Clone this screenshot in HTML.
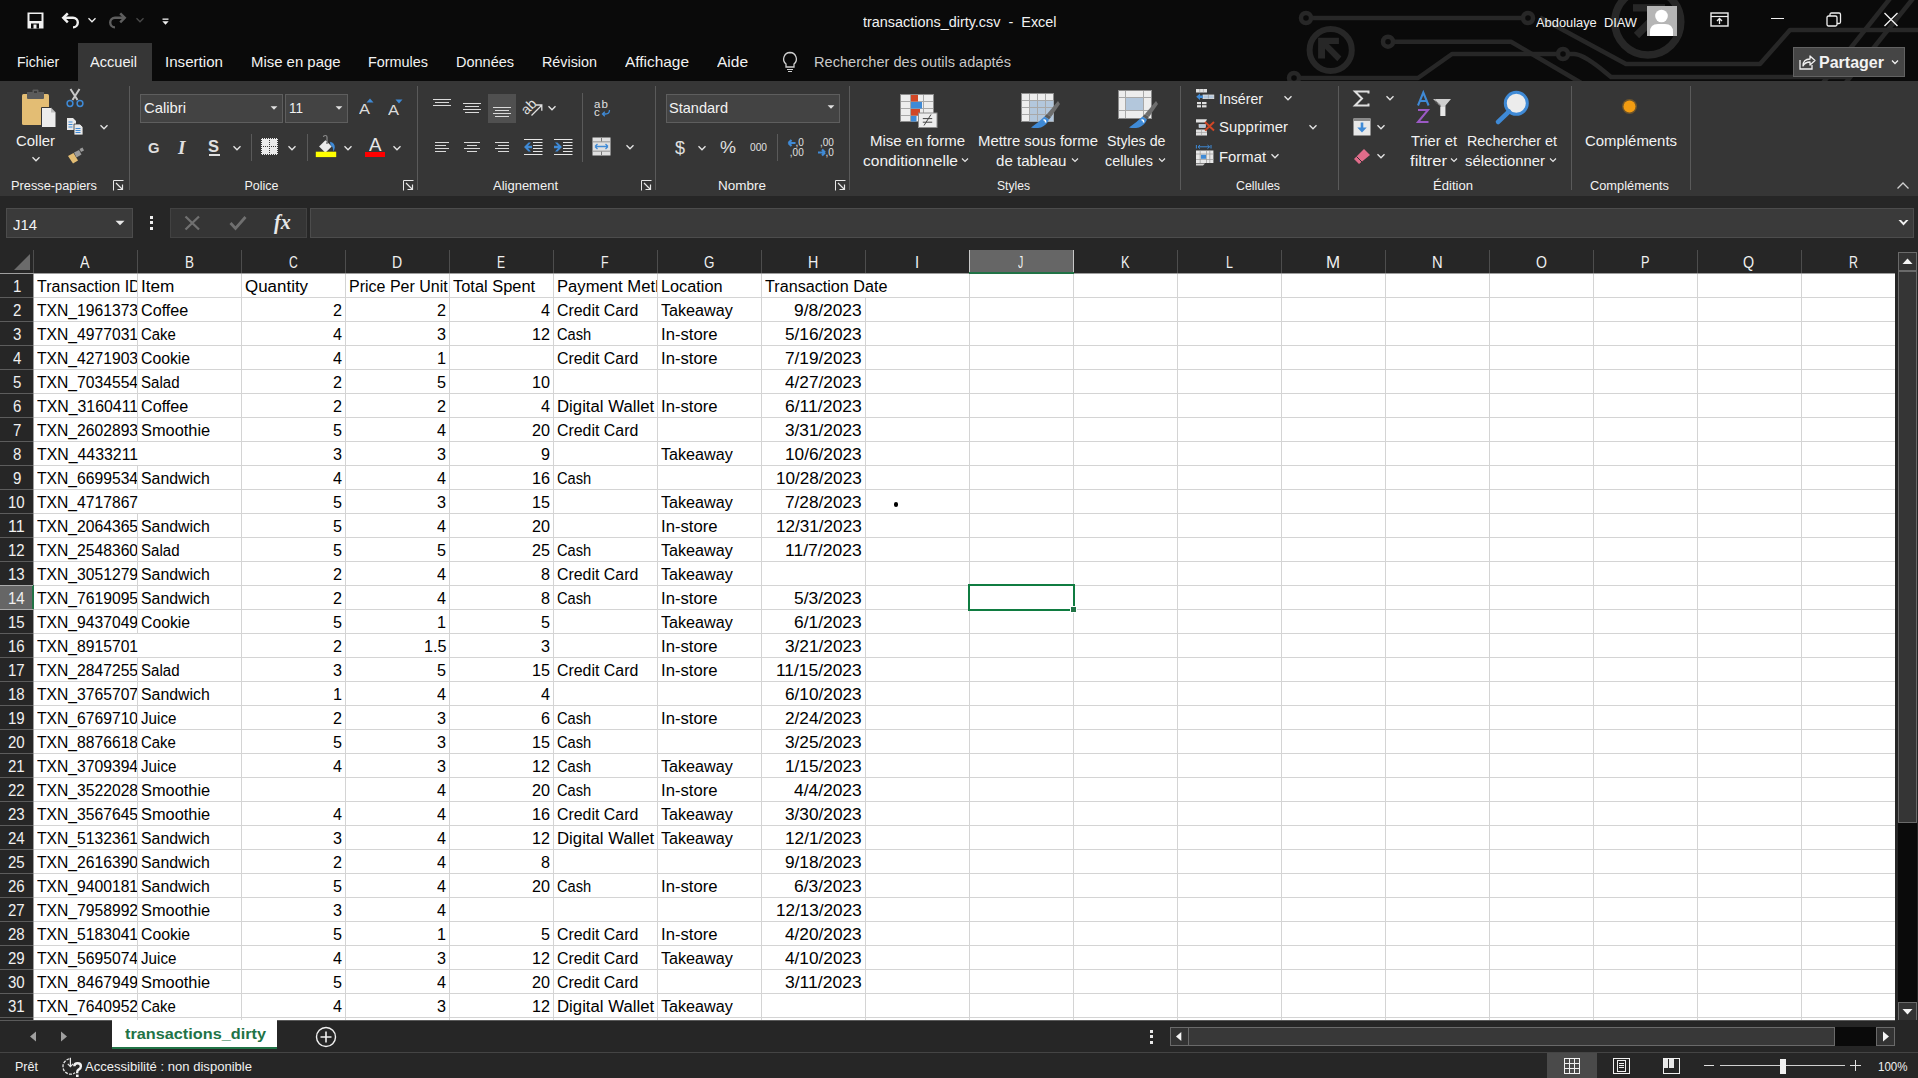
<!DOCTYPE html><html><head><meta charset="utf-8"><style>
html,body{margin:0;padding:0;}
body{width:1918px;height:1078px;overflow:hidden;position:relative;background:#262626;font-family:"Liberation Sans",sans-serif;}
.t{position:absolute;white-space:pre;transform-origin:0 0;}
.r{position:absolute;}
.s{position:absolute;overflow:visible;}
</style></head><body>
<div class="r" style="left:0px;top:0px;width:1918px;height:81px;background:#0a0a0a;"></div>
<svg class="s" style="left:0;top:0" width="1918" height="81" viewBox="0 0 1918 81">
<g fill="none" stroke="#272727" stroke-width="4.5" stroke-linejoin="round">
<path d="M1312 18 H1522"/>
<circle cx="1306" cy="18" r="5"/><circle cx="1528" cy="18" r="5"/>
<circle cx="1330.7" cy="50" r="21.1" stroke-width="6"/>
<path d="M1394 41.7 H1511 L1583 84"/>
<circle cx="1388" cy="41.7" r="5"/>
<path d="M1300 78 H1418 L1452 54 H1557"/>
<circle cx="1294" cy="78" r="5"/>
<circle cx="1563" cy="54" r="5"/>
<path d="M1569 54 H1574 Q1582 54 1600 68 L1611 77 H1850"/>
<path d="M1540 17.5 L1626 64 H1760 L1790 30 H1930"/>
<circle cx="1647.8" cy="22" r="33" stroke-width="7.5"/>
<path d="M1822 84 L1892 -4"/><path d="M1845.5 83 L1915 -4"/>
</g>
<path d="M1318.1 37.8 H1338.9 V43.9 H1328.9 L1341.4 56.4 L1337.3 61.2 L1325 48.7 V58.6 H1318.1 Z" fill="#272727"/>
<path d="M1633 4.2 H1665 V11.5 H1633 Z" fill="#272727"/><path d="M1636.5 35.5 L1662 10" stroke="#272727" stroke-width="7.5"/>
</svg>
<svg class="s" style="left:27px;top:12px;" width="17" height="17" viewBox="0 0 17 17"><path d="M0.5 0.5 H16.5 V16.5 H0.5 Z" fill="#f0f0f0"/><rect x="2.5" y="2" width="12" height="7" fill="#0a0a0a"/><rect x="4" y="11.5" width="8" height="5" fill="#0a0a0a"/><rect x="6.5" y="12.5" width="3" height="4" fill="#f0f0f0"/></svg>
<svg class="s" style="left:58px;top:10px;" width="24" height="20" viewBox="0 0 24 20"><path d="M6 7.8 H15 A4.8 4.8 0 0 1 15 17.4" fill="none" stroke="#f0f0f0" stroke-width="2.4"/><path d="M9.8 3.3 L5.3 7.8 L9.8 12.3" fill="none" stroke="#f0f0f0" stroke-width="2.5" stroke-linejoin="miter"/></svg>
<svg class="s" style="left:85.5px;top:14.5px;" width="12" height="10" viewBox="0 0 12 10"><path d="M2.5 3.25 L6 6.75 L9.5 3.25" fill="none" stroke="#f0f0f0" stroke-width="1.3"/></svg>
<svg class="s" style="left:106px;top:10px;" width="24" height="20" viewBox="0 0 24 20"><path d="M18 7.8 H9 A4.8 4.8 0 0 0 9 17.4" fill="none" stroke="#5e5e5e" stroke-width="2.4"/><path d="M14.2 3.3 L18.7 7.8 L14.2 12.3" fill="none" stroke="#5e5e5e" stroke-width="2.5" stroke-linejoin="miter"/></svg>
<svg class="s" style="left:133.5px;top:14.5px;" width="12" height="10" viewBox="0 0 12 10"><path d="M2.5 3.25 L6 6.75 L9.5 3.25" fill="none" stroke="#4a4a4a" stroke-width="1.3"/></svg>
<svg class="s" style="left:161px;top:18px;" width="9" height="8" viewBox="0 0 9 8"><rect x="1.5" y="0.5" width="6" height="1.3" fill="#f0f0f0"/><path d="M1.3 3.3 H7.7 L4.5 6.8 Z" fill="#f0f0f0"/></svg>
<div class="t" style="left:863.00px;top:14.95px;font-size:14px;line-height:14px;color:#f2f2f2;transform:scaleX(1.0292);">transactions_dirty.csv  -  Excel</div>
<div class="t" style="left:1535.50px;top:15.50px;font-size:13px;line-height:13px;color:#f2f2f2;transform:scaleX(0.9890);">Abdoulaye  DIAW</div>
<svg class="s" style="left:1647px;top:6px;" width="30" height="30" viewBox="0 0 30 30"><rect width="30" height="30" fill="#b5b5b5"/><circle cx="14.5" cy="10" r="6.3" fill="#fff"/><path d="M3 30 V26 Q3 18 11 18 H18 Q26 18 26 26 V30 Z" fill="#fff"/></svg>
<svg class="s" style="left:1710px;top:12px;" width="19" height="15" viewBox="0 0 19 15"><rect x="1" y="1" width="17" height="13" fill="none" stroke="#f0f0f0" stroke-width="1.4"/><path d="M1 4.5 H18" stroke="#f0f0f0" stroke-width="1.2"/><path d="M9.5 12 V6.5 M7 9 L9.5 6.5 L12 9" fill="none" stroke="#f0f0f0" stroke-width="1.3"/></svg>
<div class="r" style="left:1771px;top:18px;width:13px;height:1.3px;background:#f0f0f0;"></div>
<svg class="s" style="left:1826px;top:12px;" width="16" height="15" viewBox="0 0 16 15"><rect x="1" y="4" width="10" height="10" rx="1.5" fill="none" stroke="#f0f0f0" stroke-width="1.3"/><path d="M4 4 V2.5 Q4 1 5.5 1 H13 Q14.5 1 14.5 2.5 V10 Q14.5 11.5 13 11.5 H11" fill="none" stroke="#f0f0f0" stroke-width="1.3"/></svg>
<svg class="s" style="left:1883px;top:12px;" width="16" height="15" viewBox="0 0 16 15"><path d="M1.5 1 L14.5 14 M14.5 1 L1.5 14" stroke="#f0f0f0" stroke-width="1.4"/></svg>
<div class="r" style="left:1793px;top:47px;width:112px;height:30px;background:#454545;box-sizing:border-box;border:1px solid #626262;"></div>
<svg class="s" style="left:1799px;top:54px;" width="17" height="16" viewBox="0 0 17 16"><path d="M1 6 V15 H13 V11" fill="none" stroke="#f0f0f0" stroke-width="1.3"/><path d="M4 12 Q4 5 11 5 V2 L16 6.5 L11 11 V8 Q6 8 4 12 Z" fill="none" stroke="#f0f0f0" stroke-width="1.3" stroke-linejoin="round"/></svg>
<div class="t" style="left:1819.00px;top:54.96px;font-size:16px;line-height:16px;color:#f2f2f2;font-weight:bold;">Partager</div>
<svg class="s" style="left:1889px;top:57px;" width="12" height="10" viewBox="0 0 12 10"><path d="M3 3.5 L6 6.5 L9 3.5" fill="none" stroke="#f0f0f0" stroke-width="1.3"/></svg>
<div class="r" style="left:78px;top:43px;width:74px;height:38px;background:#363636;"></div>
<div class="t" style="left:16.60px;top:54.73px;font-size:14.5px;line-height:14.5px;color:#f2f2f2;transform:scaleX(0.9700);">Fichier</div>
<div class="t" style="left:90.30px;top:54.73px;font-size:14.5px;line-height:14.5px;color:#f2f2f2;transform:scaleX(1.0077);">Accueil</div>
<div class="t" style="left:165.00px;top:54.73px;font-size:14.5px;line-height:14.5px;color:#f2f2f2;transform:scaleX(1.0430);">Insertion</div>
<div class="t" style="left:250.50px;top:54.73px;font-size:14.5px;line-height:14.5px;color:#f2f2f2;transform:scaleX(1.0281);">Mise en page</div>
<div class="t" style="left:368.00px;top:54.73px;font-size:14.5px;line-height:14.5px;color:#f2f2f2;transform:scaleX(0.9930);">Formules</div>
<div class="t" style="left:456.00px;top:54.73px;font-size:14.5px;line-height:14.5px;color:#f2f2f2;">Données</div>
<div class="t" style="left:542.00px;top:54.73px;font-size:14.5px;line-height:14.5px;color:#f2f2f2;transform:scaleX(0.9891);">Révision</div>
<div class="t" style="left:625.00px;top:54.73px;font-size:14.5px;line-height:14.5px;color:#f2f2f2;transform:scaleX(1.0633);">Affichage</div>
<div class="t" style="left:717.00px;top:54.73px;font-size:14.5px;line-height:14.5px;color:#f2f2f2;transform:scaleX(1.0682);">Aide</div>
<svg class="s" style="left:781px;top:51px;" width="18" height="22" viewBox="0 0 18 22"><path d="M9 1.5 A6.5 6.5 0 0 0 5 13 V16 H13 V13 A6.5 6.5 0 0 0 9 1.5 Z" fill="none" stroke="#d0d0d0" stroke-width="1.3"/><path d="M6 18.5 H12 M7 20.5 H11" stroke="#d0d0d0" stroke-width="1.2"/></svg>
<div class="t" style="left:814.00px;top:54.73px;font-size:14.5px;line-height:14.5px;color:#c8c8c8;transform:scaleX(1.0059);">Rechercher des outils adaptés</div>
<div class="r" style="left:0px;top:81px;width:1918px;height:115px;background:#363636;"></div>
<svg class="s" style="left:19px;top:88px;" width="40" height="42" viewBox="0 0 40 42"><rect x="3" y="6" width="27" height="31" rx="1.5" fill="#e3bd74"/>
<path d="M8 4 H25 V10 Q25 11 24 11 H9 Q8 11 8 10 Z" fill="#5b5b5b"/><rect x="13.5" y="1.5" width="6" height="4" rx="1" fill="#5b5b5b"/><rect x="15" y="3" width="3" height="2" fill="#3a3a3a"/>
<path d="M22.5 19.5 H32 L37 24.5 V39.5 H22.5 Z" fill="#ececec" stroke="#363636" stroke-width="1"/><path d="M32 20 V24.5 H36.5 Z" fill="#bdbdbd"/></svg>
<div class="t" style="left:16.00px;top:133.85px;font-size:14px;line-height:14px;color:#f2f2f2;transform:scaleX(1.0666);">Coller</div>
<svg class="s" style="left:29.5px;top:153.5px;" width="12" height="10" viewBox="0 0 12 10"><path d="M2.5 3.25 L6 6.75 L9.5 3.25" fill="none" stroke="#e6e6e6" stroke-width="1.3"/></svg>
<svg class="s" style="left:65px;top:88px;" width="20" height="20" viewBox="0 0 20 20"><path d="M5.5 1 L12.5 12 M14.5 1 L7.5 12" stroke="#c8c8c8" stroke-width="2"/><circle cx="5" cy="15.5" r="2.9" fill="none" stroke="#3f8ad6" stroke-width="1.5"/><circle cx="15" cy="15.5" r="2.9" fill="none" stroke="#3f8ad6" stroke-width="1.5"/></svg>
<svg class="s" style="left:66px;top:117px;" width="19" height="19" viewBox="0 0 19 19"><path d="M1 1 H7 L10 4 V13 H1 Z" fill="#e8e8e8"/><path d="M8 7 H14 L17 10 V18 H8 Z" fill="#e8e8e8" stroke="#333" stroke-width="0.8"/><path d="M2.5 5 H6.5 M2.5 7.5 H6.5 M2.5 10 H6.5 M9.5 11.5 H14.5 M9.5 13.5 H14.5 M9.5 15.5 H14.5" stroke="#3f8ad6" stroke-width="1"/></svg>
<svg class="s" style="left:98px;top:122px;" width="12" height="10" viewBox="0 0 12 10"><path d="M2.5 3.25 L6 6.75 L9.5 3.25" fill="none" stroke="#e6e6e6" stroke-width="1.3"/></svg>
<svg class="s" style="left:66px;top:147px;" width="19" height="18" viewBox="0 0 19 18"><path d="M2 9 L7.5 6 L12 13.5 L7 16.5 Z" fill="#e3bd74"/><path d="M8 5.5 L13 3 L15.5 7.5 L10.5 10.5 Z" fill="#9a9a9a"/><path d="M13.5 2 L16.5 0.5 L18 3.5 L15 5 Z" fill="#9a9a9a"/></svg>
<div class="t" style="left:10.60px;top:179.92px;font-size:12.5px;line-height:12.5px;color:#f2f2f2;transform:scaleX(1.0231);">Presse-papiers</div>
<svg class="s" style="left:113px;top:180px;" width="11" height="11" viewBox="0 0 11 11"><path d="M0.5 10.5 V0.5 H10.5" fill="none" stroke="#e6e6e6" stroke-width="1"/><path d="M3 3 L9.5 9.5 M9.5 4.5 V9.5 H4.5" fill="none" stroke="#e6e6e6" stroke-width="1.2"/></svg>
<div class="r" style="left:129px;top:86px;width:1px;height:104px;background:#5a5a5a;"></div>
<div class="r" style="left:140px;top:94px;width:143px;height:29px;background:#434343;box-sizing:border-box;border:1px solid #5e5e5e;"></div>
<div class="t" style="left:144.00px;top:101.23px;font-size:14.5px;line-height:14.5px;color:#f2f2f2;transform:scaleX(1.0221);">Calibri</div>
<svg class="s" style="left:268px;top:103.5px;" width="12" height="8" viewBox="0 0 12 8"><path d="M2.6 2.3 L9.4 2.3 L6 5.7 Z" fill="#e0e0e0"/></svg>
<div class="r" style="left:285px;top:94px;width:63px;height:29px;background:#434343;box-sizing:border-box;border:1px solid #5e5e5e;"></div>
<div class="t" style="left:289.00px;top:101.23px;font-size:14.5px;line-height:14.5px;color:#f2f2f2;transform:scaleX(0.9302);">11</div>
<svg class="s" style="left:333px;top:103.5px;" width="12" height="8" viewBox="0 0 12 8"><path d="M2.6 2.3 L9.4 2.3 L6 5.7 Z" fill="#e0e0e0"/></svg>
<div class="t" style="left:359.00px;top:101.30px;font-size:15px;line-height:15px;color:#dcdcdc;transform:scaleX(1.0994);">A</div>
<svg class="s" style="left:366px;top:98px;" width="8" height="5" viewBox="0 0 8 5"><path d="M0.5 4.5 L4 0.5 L7.5 4.5 Z" fill="#3f8ad6"/></svg>
<div class="t" style="left:388.00px;top:102.30px;font-size:15px;line-height:15px;color:#dcdcdc;transform:scaleX(1.0994);">A</div>
<svg class="s" style="left:395px;top:99px;" width="8" height="5" viewBox="0 0 8 5"><path d="M0.5 0.5 L7.5 0.5 L4 4.5 Z" fill="#3f8ad6"/></svg>
<div class="t" style="left:147.50px;top:139.88px;font-size:15.5px;line-height:15.5px;color:#e0e0e0;font-weight:bold;transform:scaleX(0.9539);">G</div>
<div class="t" style="left:178px;top:138px;font-family:'Liberation Serif',serif;font-style:italic;font-weight:bold;font-size:19px;line-height:20px;color:#e0e0e0;">I</div>
<div class="t" style="left:208.00px;top:139.46px;font-size:16px;line-height:16px;color:#e0e0e0;font-weight:bold;transform:scaleX(1.0307);">S</div>
<div class="r" style="left:208.5px;top:154px;width:11px;height:1.5px;background:#e0e0e0;"></div>
<svg class="s" style="left:230.5px;top:142.5px;" width="12" height="10" viewBox="0 0 12 10"><path d="M2.5 3.25 L6 6.75 L9.5 3.25" fill="none" stroke="#e6e6e6" stroke-width="1.3"/></svg>
<div class="r" style="left:251px;top:134px;width:1px;height:27px;background:#5a5a5a;"></div>
<svg class="s" style="left:255px;top:132px;" width="30" height="30" viewBox="0 0 30 30"><rect x="6" y="6" width="17" height="17" fill="#ebebeb"/><path d="M6.5 6 V23 M22.5 6 V23 M6 6.5 H23 M6 22.5 H23" stroke="#363636" stroke-width="1" stroke-dasharray="1 1"/><path d="M14.5 8 V22 M8 14.5 H22" stroke="#3a3a3a" stroke-width="1" stroke-dasharray="1 1"/></svg>
<svg class="s" style="left:286px;top:142.5px;" width="12" height="10" viewBox="0 0 12 10"><path d="M2.5 3.25 L6 6.75 L9.5 3.25" fill="none" stroke="#e6e6e6" stroke-width="1.3"/></svg>
<div class="r" style="left:307px;top:134px;width:1px;height:27px;background:#5a5a5a;"></div>
<svg class="s" style="left:310px;top:132px;" width="30" height="30" viewBox="0 0 30 30"><path d="M13.5 5 Q13.5 3.5 15.3 3.5 Q17 3.5 17 5 V10.5" fill="none" stroke="#8a8a8a" stroke-width="1.2"/><path d="M15.4 8.2 L21.7 14.5 L15.4 20.8 L9.1 14.5 Z" fill="#ebebeb"/><path d="M17 10 V12" stroke="#363636" stroke-width="1"/><path d="M20 9.8 Q25 11 24.8 15.5 Q24.6 18 23 19.3 Q23.5 15 20.5 13 Z" fill="#3f8ad6"/><rect x="5.8" y="19.7" width="20.4" height="5.4" fill="#ffff00"/></svg>
<svg class="s" style="left:342px;top:142.5px;" width="12" height="10" viewBox="0 0 12 10"><path d="M2.5 3.25 L6 6.75 L9.5 3.25" fill="none" stroke="#e6e6e6" stroke-width="1.3"/></svg>
<div class="t" style="left:368.50px;top:135.76px;font-size:18px;line-height:18px;color:#e8e8e8;transform:scaleX(1.0411);">A</div>
<div class="r" style="left:365px;top:152px;width:20px;height:5px;background:#ff0000;"></div>
<svg class="s" style="left:391px;top:142.5px;" width="12" height="10" viewBox="0 0 12 10"><path d="M2.5 3.25 L6 6.75 L9.5 3.25" fill="none" stroke="#e6e6e6" stroke-width="1.3"/></svg>
<div class="t" style="left:244.50px;top:179.92px;font-size:12.5px;line-height:12.5px;color:#f2f2f2;">Police</div>
<svg class="s" style="left:403px;top:180px;" width="11" height="11" viewBox="0 0 11 11"><path d="M0.5 10.5 V0.5 H10.5" fill="none" stroke="#e6e6e6" stroke-width="1"/><path d="M3 3 L9.5 9.5 M9.5 4.5 V9.5 H4.5" fill="none" stroke="#e6e6e6" stroke-width="1.2"/></svg>
<div class="r" style="left:417px;top:86px;width:1px;height:104px;background:#5a5a5a;"></div>
<div class="r" style="left:433px;top:99px;width:18px;height:1.2px;background:#dadada;"></div>
<div class="r" style="left:435px;top:102px;width:14px;height:1.2px;background:#dadada;"></div>
<div class="r" style="left:433px;top:105px;width:18px;height:1.2px;background:#dadada;"></div>
<div class="r" style="left:463px;top:103px;width:18px;height:1.2px;background:#dadada;"></div>
<div class="r" style="left:465px;top:106px;width:14px;height:1.2px;background:#dadada;"></div>
<div class="r" style="left:463px;top:109px;width:18px;height:1.2px;background:#dadada;"></div>
<div class="r" style="left:465px;top:112px;width:14px;height:1.2px;background:#dadada;"></div>
<div class="r" style="left:488px;top:94px;width:28px;height:29px;background:#505050;"></div>
<div class="r" style="left:493px;top:107px;width:18px;height:1.2px;background:#dadada;"></div>
<div class="r" style="left:495px;top:110px;width:14px;height:1.2px;background:#dadada;"></div>
<div class="r" style="left:493px;top:113px;width:18px;height:1.2px;background:#dadada;"></div>
<div class="r" style="left:495px;top:116px;width:14px;height:1.2px;background:#dadada;"></div>
<svg class="s" style="left:515px;top:90px;" width="35" height="35" viewBox="0 0 35 35"><text x="0" y="0" transform="translate(11.5 25.5) rotate(-45)" font-family="Liberation Sans" font-size="14" fill="#e0e0e0">ab</text><path d="M16.5 25.5 L26.5 15.5 M21 15 H26.8 V20.8" fill="none" stroke="#e0e0e0" stroke-width="1.3"/></svg>
<svg class="s" style="left:546px;top:103px;" width="12" height="10" viewBox="0 0 12 10"><path d="M2.5 3.25 L6 6.75 L9.5 3.25" fill="none" stroke="#e6e6e6" stroke-width="1.3"/></svg>
<div class="r" style="left:435px;top:142px;width:14px;height:1.2px;background:#dadada;"></div>
<div class="r" style="left:435px;top:145px;width:11px;height:1.2px;background:#dadada;"></div>
<div class="r" style="left:435px;top:148px;width:14px;height:1.2px;background:#dadada;"></div>
<div class="r" style="left:435px;top:151px;width:11px;height:1.2px;background:#dadada;"></div>
<div class="r" style="left:464px;top:142px;width:16px;height:1.2px;background:#dadada;"></div>
<div class="r" style="left:467px;top:145px;width:10px;height:1.2px;background:#dadada;"></div>
<div class="r" style="left:464px;top:148px;width:16px;height:1.2px;background:#dadada;"></div>
<div class="r" style="left:467px;top:151px;width:10px;height:1.2px;background:#dadada;"></div>
<div class="r" style="left:495px;top:142px;width:14px;height:1.2px;background:#dadada;"></div>
<div class="r" style="left:498px;top:145px;width:11px;height:1.2px;background:#dadada;"></div>
<div class="r" style="left:495px;top:148px;width:14px;height:1.2px;background:#dadada;"></div>
<div class="r" style="left:498px;top:151px;width:11px;height:1.2px;background:#dadada;"></div>
<svg class="s" style="left:515px;top:130px;" width="70" height="30" viewBox="0 0 70 30"><path d="M9 9.5 H27.5 M18 12.5 H27.5 M18 15.5 H27.5 M18 18.5 H27.5 M18 21.5 H27.5 M9 24.5 H27.5" stroke="#e6e6e6" stroke-width="1.1"/><path d="M9 17 L13.5 12.5 H16 L13 15.7 H17 V18.3 H13 L16 21.5 H13.5 Z" fill="#3f8ad6"/><path d="M39 9.5 H57.5 M48 12.5 H57.5 M48 15.5 H57.5 M48 18.5 H57.5 M48 21.5 H57.5 M39 24.5 H57.5" stroke="#e6e6e6" stroke-width="1.1"/><path d="M47 17 L42.5 12.5 H40 L43 15.7 H39 V18.3 H43 L40 21.5 H42.5 Z" fill="#3f8ad6"/></svg>
<div class="r" style="left:582px;top:93px;width:1px;height:69px;background:#5a5a5a;"></div>
<svg class="s" style="left:590px;top:95px;" width="25" height="25" viewBox="0 0 25 25"><text x="4" y="13" font-family="Liberation Sans" font-size="11.5" fill="#e0e0e0" textLength="14">ab</text><text x="4" y="21" font-family="Liberation Sans" font-size="11.5" fill="#e0e0e0">c</text><path d="M19.5 15 Q19.5 19 15.5 19 H12.5 M14.8 16.8 L12.5 19 L14.8 21.2" fill="none" stroke="#3f8ad6" stroke-width="1.3"/></svg>
<svg class="s" style="left:592px;top:137px;" width="19" height="19" viewBox="0 0 19 19"><rect x="0.5" y="0.5" width="18" height="18" fill="#e0e0e0"/><path d="M1 5 H18 M1 14 H18 M9.5 1 V4.5 M9.5 14.5 V18" stroke="#777" stroke-width="1"/><rect x="1" y="5.5" width="17" height="8" fill="#e0e0e0"/><path d="M3 9.5 H16 M3 9.5 L5.5 7 M3 9.5 L5.5 12 M16 9.5 L13.5 7 M16 9.5 L13.5 12" fill="none" stroke="#3f8ad6" stroke-width="1.3"/></svg>
<svg class="s" style="left:624px;top:142px;" width="12" height="10" viewBox="0 0 12 10"><path d="M2.5 3.25 L6 6.75 L9.5 3.25" fill="none" stroke="#e6e6e6" stroke-width="1.3"/></svg>
<div class="t" style="left:493.00px;top:179.92px;font-size:12.5px;line-height:12.5px;color:#f2f2f2;transform:scaleX(1.0394);">Alignement</div>
<svg class="s" style="left:641px;top:180px;" width="11" height="11" viewBox="0 0 11 11"><path d="M0.5 10.5 V0.5 H10.5" fill="none" stroke="#e6e6e6" stroke-width="1"/><path d="M3 3 L9.5 9.5 M9.5 4.5 V9.5 H4.5" fill="none" stroke="#e6e6e6" stroke-width="1.2"/></svg>
<div class="r" style="left:655px;top:86px;width:1px;height:104px;background:#5a5a5a;"></div>
<div class="r" style="left:666px;top:94px;width:174px;height:29px;background:#434343;box-sizing:border-box;border:1px solid #5e5e5e;"></div>
<div class="t" style="left:669.00px;top:101.23px;font-size:14.5px;line-height:14.5px;color:#f2f2f2;transform:scaleX(1.0026);">Standard</div>
<svg class="s" style="left:824.5px;top:103px;" width="12" height="8" viewBox="0 0 12 8"><path d="M2.6 2.3 L9.4 2.3 L6 5.7 Z" fill="#e0e0e0"/></svg>
<div class="t" style="left:674.50px;top:138.42px;font-size:19px;line-height:19px;color:#e0e0e0;transform:scaleX(0.9465);">$</div>
<svg class="s" style="left:696px;top:142.5px;" width="12" height="10" viewBox="0 0 12 10"><path d="M2.5 3.25 L6 6.75 L9.5 3.25" fill="none" stroke="#e6e6e6" stroke-width="1.3"/></svg>
<div class="t" style="left:720.00px;top:139.11px;font-size:17px;line-height:17px;color:#e0e0e0;transform:scaleX(1.0584);">%</div>
<div class="t" style="left:750.00px;top:142.19px;font-size:11px;line-height:11px;color:#e0e0e0;transform:scaleX(0.9264);">000</div>
<div class="r" style="left:777px;top:134px;width:1px;height:27px;background:#5a5a5a;"></div>
<svg class="s" style="left:785px;top:135px;" width="55" height="25" viewBox="0 0 55 25"><text x="10.5" y="11" font-family="Liberation Sans" font-size="10" fill="#e0e0e0">,0</text><text x="4.8" y="20.5" font-family="Liberation Sans" font-size="10" fill="#e0e0e0">,00</text><path d="M3.5 8 H10.5 M3.5 8 L6.5 5 M3.5 8 L6.5 11" fill="none" stroke="#3f8ad6" stroke-width="2.2"/><text x="35" y="11" font-family="Liberation Sans" font-size="10" fill="#e0e0e0">,00</text><text x="40.5" y="20.5" font-family="Liberation Sans" font-size="10" fill="#e0e0e0">,0</text><path d="M33 17.5 H40 M40 17.5 L37 14.5 M40 17.5 L37 20.5" fill="none" stroke="#3f8ad6" stroke-width="2.2"/></svg>
<div class="t" style="left:717.50px;top:179.92px;font-size:12.5px;line-height:12.5px;color:#f2f2f2;transform:scaleX(1.0797);">Nombre</div>
<svg class="s" style="left:835px;top:180px;" width="11" height="11" viewBox="0 0 11 11"><path d="M0.5 10.5 V0.5 H10.5" fill="none" stroke="#e6e6e6" stroke-width="1"/><path d="M3 3 L9.5 9.5 M9.5 4.5 V9.5 H4.5" fill="none" stroke="#e6e6e6" stroke-width="1.2"/></svg>
<div class="r" style="left:849px;top:86px;width:1px;height:104px;background:#5a5a5a;"></div>
<svg class="s" style="left:890px;top:85px;" width="60" height="50" viewBox="0 0 60 50"><rect x="10.5" y="9.5" width="33" height="27" fill="#ededed" stroke="#8c8c8c" stroke-width="1"/>
<path d="M20.5 10 V36 M33.5 10 V36 M11 16.5 H43 M11 23.5 H43 M11 30.5 H43" stroke="#a8a8a8" stroke-width="1"/>
<rect x="21" y="10" width="7" height="6.5" fill="#d24726"/><rect x="21" y="17" width="11" height="6.5" fill="#3f8ad6"/>
<rect x="21" y="24" width="9" height="6.5" fill="#d24726"/><rect x="21" y="31" width="5.5" height="5.5" fill="#3f8ad6"/>
<rect x="28.5" y="28" width="18.5" height="14.5" fill="#ededed" stroke="#8c8c8c" stroke-width="1"/>
<path d="M34 40.5 L41 29.5 M32.8 33.6 H42.2 M32.8 37.2 H42.2" stroke="#444" stroke-width="1" fill="none"/></svg>
<div class="t" style="left:870.00px;top:134.15px;font-size:14px;line-height:14px;color:#f2f2f2;transform:scaleX(1.0711);">Mise en forme</div>
<div class="t" style="left:863.00px;top:154.15px;font-size:14px;line-height:14px;color:#f2f2f2;transform:scaleX(1.1096);">conditionnelle</div>
<svg class="s" style="left:959px;top:155px;" width="12" height="10" viewBox="0 0 12 10"><path d="M3 3.5 L6 6.5 L9 3.5" fill="none" stroke="#e6e6e6" stroke-width="1.2"/></svg>
<svg class="s" style="left:1010px;top:85px;" width="60" height="50" viewBox="0 0 60 50"><rect x="11.5" y="8.5" width="32" height="28" fill="#ededed" stroke="#8c8c8c" stroke-width="1"/>
<rect x="19.5" y="15.5" width="24" height="21" fill="#b3c7dc"/>
<path d="M19.5 9 V36 M27.5 9 V36 M35.5 9 V36 M12 15.5 H43 M12 22.5 H43 M12 29.5 H43" stroke="#a8a8a8" stroke-width="1"/>
<path d="M48 16 L50 19 L41 32 L37 29 Z" fill="#6e6e6e"/><path d="M37 29 L41 32 L39 34.5 L34.5 31.5 Z" fill="#5a5a5a"/>
<path d="M34.5 31.5 L39 34.5 Q37 40 31 42.5 Q25 43.5 21 42.5 Q29 37 34.5 31.5 Z" fill="#3f8ad6"/>
<path d="M33.5 35 Q36 34.5 35.5 37.5" fill="none" stroke="#fff" stroke-width="1.6"/></svg>
<div class="t" style="left:978.00px;top:134.15px;font-size:14px;line-height:14px;color:#f2f2f2;transform:scaleX(1.0638);">Mettre sous forme</div>
<div class="t" style="left:996.00px;top:154.15px;font-size:14px;line-height:14px;color:#f2f2f2;transform:scaleX(1.0782);">de tableau</div>
<svg class="s" style="left:1069px;top:155px;" width="12" height="10" viewBox="0 0 12 10"><path d="M3 3.5 L6 6.5 L9 3.5" fill="none" stroke="#e6e6e6" stroke-width="1.2"/></svg>
<svg class="s" style="left:1108px;top:85px;" width="60" height="50" viewBox="0 0 60 50"><rect x="10.5" y="5.5" width="33" height="28" fill="#ededed" stroke="#8c8c8c" stroke-width="1"/>
<rect x="17.5" y="12.5" width="18" height="13" fill="#b3c7dc"/>
<path d="M17.5 6 V33 M35.5 6 V33 M11 12.5 H43 M11 25.5 H43" stroke="#a8a8a8" stroke-width="1"/>
<path d="M48 16 L50 19 L41 32 L37 29 Z" fill="#6e6e6e"/><path d="M37 29 L41 32 L39 34.5 L34.5 31.5 Z" fill="#5a5a5a"/>
<path d="M34.5 31.5 L39 34.5 Q37 40 31 42.5 Q25 43.5 21 42.5 Q29 37 34.5 31.5 Z" fill="#3f8ad6"/>
<path d="M33.5 35 Q36 34.5 35.5 37.5" fill="none" stroke="#fff" stroke-width="1.6"/></svg>
<div class="t" style="left:1107.00px;top:134.15px;font-size:14px;line-height:14px;color:#f2f2f2;transform:scaleX(1.0159);">Styles de</div>
<div class="t" style="left:1105.00px;top:154.15px;font-size:14px;line-height:14px;color:#f2f2f2;transform:scaleX(1.0281);">cellules</div>
<svg class="s" style="left:1156px;top:155px;" width="12" height="10" viewBox="0 0 12 10"><path d="M3 3.5 L6 6.5 L9 3.5" fill="none" stroke="#e6e6e6" stroke-width="1.2"/></svg>
<div class="t" style="left:997.00px;top:179.92px;font-size:12.5px;line-height:12.5px;color:#f2f2f2;transform:scaleX(0.9695);">Styles</div>
<div class="r" style="left:1180px;top:86px;width:1px;height:104px;background:#5a5a5a;"></div>
<svg class="s" style="left:1190px;top:85px;" width="30" height="30" viewBox="0 0 30 30"><rect x="6" y="4" width="11" height="3.5" fill="#e0e0e0"/><path d="M9.7 4 V7.5 M13.4 4 V7.5" stroke="#9a9a9a" stroke-width="0.6"/><rect x="13" y="10" width="10.8" height="3.6" fill="#b3c7dc" stroke="#e0e0e0" stroke-width="0.8"/><path d="M18.4 10 V13.6" stroke="#8a8a8a" stroke-width="0.6"/><path d="M6.2 11.8 L10 8.6 V10.6 H13 V13 H10 V15 Z" fill="#3f8ad6"/><rect x="7" y="17" width="4" height="2.2" fill="#e0e0e0"/><rect x="12" y="17" width="4.5" height="2.2" fill="#e0e0e0"/><rect x="7" y="20.2" width="4" height="2.2" fill="#e0e0e0"/><rect x="12" y="20.2" width="4.5" height="2.2" fill="#e0e0e0"/></svg>
<div class="t" style="left:1219.00px;top:91.73px;font-size:14.5px;line-height:14.5px;color:#f2f2f2;transform:scaleX(0.9751);">Insérer</div>
<svg class="s" style="left:1281.5px;top:93px;" width="12" height="10" viewBox="0 0 12 10"><path d="M2.5 3.25 L6 6.75 L9.5 3.25" fill="none" stroke="#e6e6e6" stroke-width="1.3"/></svg>
<svg class="s" style="left:1190px;top:115px;" width="30" height="25" viewBox="0 0 30 25"><path d="M6 4.3 H17 L15.5 7.5 H6 Z" fill="#e0e0e0"/><rect x="9" y="9.4" width="6.5" height="3.2" fill="#b3c7dc" stroke="#e0e0e0" stroke-width="0.6"/><path d="M6 14.6 H16 L17 17 V20.5 H6 Z" fill="#e0e0e0"/><path d="M6 17.5 H17 M11.5 14.6 V20.5" stroke="#9a9a9a" stroke-width="0.6"/><path d="M15 7 L24 15.5 M24 7 L15 15.5" stroke="#d24726" stroke-width="1.9"/></svg>
<div class="t" style="left:1219.00px;top:120.23px;font-size:14.5px;line-height:14.5px;color:#f2f2f2;transform:scaleX(1.0317);">Supprimer</div>
<svg class="s" style="left:1306.5px;top:122px;" width="12" height="10" viewBox="0 0 12 10"><path d="M2.5 3.25 L6 6.75 L9.5 3.25" fill="none" stroke="#e6e6e6" stroke-width="1.3"/></svg>
<svg class="s" style="left:1190px;top:143px;" width="30" height="25" viewBox="0 0 30 25"><path d="M6.4 2 V5.5 M21 2 V5.5" stroke="#3f8ad6" stroke-width="1"/><path d="M8 3.8 H19.5 M8 3.8 L10 2 M8 3.8 L10 5.6 M19.5 3.8 L17.5 2 M19.5 3.8 L17.5 5.6" fill="none" stroke="#3f8ad6" stroke-width="1"/><rect x="6" y="7.5" width="17.4" height="12.5" fill="#e8e8e8"/><path d="M6 11 H23.4 M6 16.5 H23.4 M10.2 7.5 V20 M16.5 7.5 V20 M19.8 7.5 V20" stroke="#9a9a9a" stroke-width="0.7"/><rect x="11" y="11.8" width="5" height="4" fill="#3f8ad6"/><path d="M6 20.5 H15 L13 22.5 H6 Z" fill="#d0d0d0"/></svg>
<div class="t" style="left:1219.00px;top:149.73px;font-size:14.5px;line-height:14.5px;color:#f2f2f2;transform:scaleX(1.0236);">Format</div>
<svg class="s" style="left:1269px;top:151px;" width="12" height="10" viewBox="0 0 12 10"><path d="M2.5 3.25 L6 6.75 L9.5 3.25" fill="none" stroke="#e6e6e6" stroke-width="1.3"/></svg>
<div class="t" style="left:1236.00px;top:179.92px;font-size:12.5px;line-height:12.5px;color:#f2f2f2;transform:scaleX(0.9896);">Cellules</div>
<div class="r" style="left:1337.5px;top:86px;width:1px;height:104px;background:#5a5a5a;"></div>
<svg class="s" style="left:1353px;top:90px;" width="18" height="17" viewBox="0 0 18 17"><path d="M15.5 3.5 V1.5 H2 L9 8.5 L2 15.5 H15.5 V13.5" fill="none" stroke="#e0e0e0" stroke-width="2"/></svg>
<svg class="s" style="left:1384px;top:93px;" width="12" height="10" viewBox="0 0 12 10"><path d="M2.5 3.25 L6 6.75 L9.5 3.25" fill="none" stroke="#e6e6e6" stroke-width="1.3"/></svg>
<svg class="s" style="left:1353px;top:118px;" width="18" height="18" viewBox="0 0 18 18"><rect x="0.5" y="0.5" width="17" height="17" fill="#e8e8e8"/><rect x="0.5" y="0.5" width="17" height="2.5" fill="#8a8a8a"/><path d="M9 4.5 V11" stroke="#3f8ad6" stroke-width="2.6"/><path d="M4.3 9.5 H13.7 L9 14.5 Z" fill="#3f8ad6"/></svg>
<svg class="s" style="left:1375px;top:122px;" width="12" height="10" viewBox="0 0 12 10"><path d="M2.5 3.25 L6 6.75 L9.5 3.25" fill="none" stroke="#e6e6e6" stroke-width="1.3"/></svg>
<svg class="s" style="left:1353px;top:148px;" width="18" height="17" viewBox="0 0 18 17"><path d="M6 16 L1 11 L11 1 L17 7 Z" fill="#e06c8a"/><path d="M3.5 8.5 L9.5 14.5" stroke="#333" stroke-width="1"/></svg>
<svg class="s" style="left:1375px;top:151px;" width="12" height="10" viewBox="0 0 12 10"><path d="M2.5 3.25 L6 6.75 L9.5 3.25" fill="none" stroke="#e6e6e6" stroke-width="1.3"/></svg>
<svg class="s" style="left:1414px;top:90px;" width="40" height="36" viewBox="0 0 40 36"><path d="M4 15.5 L9.3 2.5 L14.6 15.5 M5.8 11 H12.8" fill="none" stroke="#3f8ad6" stroke-width="2"/><path d="M4 20 H14 L4 32 H14.5" fill="none" stroke="#9b59c4" stroke-width="2"/><path d="M19 9 H37 L31.5 15.5 V26 H26.5 V15.5 Z" fill="#cfcfcf"/><path d="M26.5 17 V26 H31 V17 Z" fill="#e8e8e8"/><path d="M20.5 10 L26 15.5" stroke="#777" stroke-width="1.8" stroke-dasharray="1 0.8"/></svg>
<div class="t" style="left:1411.00px;top:134.15px;font-size:14px;line-height:14px;color:#f2f2f2;transform:scaleX(1.0499);">Trier et</div>
<div class="t" style="left:1409.50px;top:154.15px;font-size:14px;line-height:14px;color:#f2f2f2;transform:scaleX(1.1894);">filtrer</div>
<svg class="s" style="left:1447.5px;top:155px;" width="12" height="10" viewBox="0 0 12 10"><path d="M3 3.5 L6 6.5 L9 3.5" fill="none" stroke="#e6e6e6" stroke-width="1.2"/></svg>
<svg class="s" style="left:1493px;top:89px;" width="38" height="38" viewBox="0 0 38 38"><circle cx="23.3" cy="14.3" r="11" fill="#ececec" stroke="#3f8ad6" stroke-width="3"/><path d="M16 22.5 L5 33" stroke="#3f8ad6" stroke-width="4.5" stroke-linecap="round"/></svg>
<div class="t" style="left:1467.00px;top:134.15px;font-size:14px;line-height:14px;color:#f2f2f2;transform:scaleX(1.0236);">Rechercher et</div>
<div class="t" style="left:1465.00px;top:154.15px;font-size:14px;line-height:14px;color:#f2f2f2;transform:scaleX(1.0598);">sélectionner</div>
<svg class="s" style="left:1547px;top:155px;" width="12" height="10" viewBox="0 0 12 10"><path d="M3 3.5 L6 6.5 L9 3.5" fill="none" stroke="#e6e6e6" stroke-width="1.2"/></svg>
<div class="t" style="left:1433.00px;top:179.92px;font-size:12.5px;line-height:12.5px;color:#f2f2f2;transform:scaleX(1.0466);">Édition</div>
<div class="r" style="left:1571px;top:86px;width:1px;height:104px;background:#5a5a5a;"></div>
<svg class="s" style="left:1621px;top:98px;" width="17" height="17" viewBox="0 0 17 17"><circle cx="8.5" cy="8.5" r="6" fill="#f39c12"/><circle cx="8.5" cy="8.5" r="7.5" fill="#f39c12" opacity="0.3"/></svg>
<div class="t" style="left:1585.00px;top:134.15px;font-size:14px;line-height:14px;color:#f2f2f2;transform:scaleX(1.0653);">Compléments</div>
<div class="t" style="left:1590.00px;top:179.92px;font-size:12.5px;line-height:12.5px;color:#f2f2f2;transform:scaleX(1.0245);">Compléments</div>
<div class="r" style="left:1689.5px;top:86px;width:1px;height:104px;background:#5a5a5a;"></div>
<svg class="s" style="left:1896px;top:181px;" width="14" height="9" viewBox="0 0 14 9"><path d="M1.5 7.5 L7 2 L12.5 7.5" fill="none" stroke="#d0d0d0" stroke-width="1.3"/></svg>
<div class="r" style="left:0px;top:196px;width:1918px;height:54px;background:#262626;"></div>
<div class="r" style="left:6px;top:208px;width:127px;height:30px;background:#3a3a3a;box-sizing:border-box;border:1px solid #4c4c4c;"></div>
<div class="t" style="left:13.00px;top:216.80px;font-size:15px;line-height:15px;color:#f2f2f2;transform:scaleX(0.9924);">J14</div>
<svg class="s" style="left:114px;top:219px;" width="12" height="8" viewBox="0 0 12 8"><path d="M1.5 1.75 L10.5 1.75 L6 6.25 Z" fill="#e8e8e8"/></svg>
<div class="r" style="left:149.5px;top:215.5px;width:3px;height:3px;background:#f0f0f0;"></div>
<div class="r" style="left:149.5px;top:221.0px;width:3px;height:3px;background:#f0f0f0;"></div>
<div class="r" style="left:149.5px;top:226.5px;width:3px;height:3px;background:#f0f0f0;"></div>
<div class="r" style="left:170px;top:208px;width:137px;height:30px;background:#353535;box-sizing:border-box;border:1px solid #424242;"></div>
<svg class="s" style="left:184px;top:215px;" width="17" height="16" viewBox="0 0 17 16"><path d="M1.5 1.5 L15 14.5 M15 1.5 L1.5 14.5" stroke="#707070" stroke-width="2.3"/></svg>
<svg class="s" style="left:229px;top:215px;" width="18" height="16" viewBox="0 0 18 16"><path d="M1.5 8 L6.5 13.5 L16.5 2" fill="none" stroke="#707070" stroke-width="2.8"/></svg>
<div class="t" style="left:274px;top:209px;font-family:'Liberation Serif',serif;font-style:italic;font-weight:bold;font-size:20px;line-height:26px;color:#e8e8e8;">fx</div>
<div class="r" style="left:310px;top:208px;width:1604px;height:30px;background:#3a3a3a;box-sizing:border-box;border:1px solid #4c4c4c;"></div>
<svg class="s" style="left:1898px;top:219px;" width="11" height="8" viewBox="0 0 11 8"><path d="M0.5 1 L3 1 L5.5 3.5 L8 1 L10.5 1 L5.5 6.5 Z" fill="#f0f0f0"/></svg>
<div class="r" style="left:0px;top:250px;width:1895px;height:23px;background:#262626;"></div>
<div class="r" style="left:969px;top:250px;width:105px;height:22px;background:#666666;box-sizing:border-box;border-left:1px solid #c8c8c8;border-right:1px solid #c8c8c8;"></div>
<div class="r" style="left:33px;top:250px;width:1px;height:23px;background:#4d4d4d;"></div>
<div class="r" style="left:137px;top:250px;width:1px;height:23px;background:#4d4d4d;"></div>
<div class="r" style="left:241px;top:250px;width:1px;height:23px;background:#4d4d4d;"></div>
<div class="r" style="left:345px;top:250px;width:1px;height:23px;background:#4d4d4d;"></div>
<div class="r" style="left:449px;top:250px;width:1px;height:23px;background:#4d4d4d;"></div>
<div class="r" style="left:553px;top:250px;width:1px;height:23px;background:#4d4d4d;"></div>
<div class="r" style="left:657px;top:250px;width:1px;height:23px;background:#4d4d4d;"></div>
<div class="r" style="left:761px;top:250px;width:1px;height:23px;background:#4d4d4d;"></div>
<div class="r" style="left:865px;top:250px;width:1px;height:23px;background:#4d4d4d;"></div>
<div class="r" style="left:1177px;top:250px;width:1px;height:23px;background:#4d4d4d;"></div>
<div class="r" style="left:1281px;top:250px;width:1px;height:23px;background:#4d4d4d;"></div>
<div class="r" style="left:1385px;top:250px;width:1px;height:23px;background:#4d4d4d;"></div>
<div class="r" style="left:1489px;top:250px;width:1px;height:23px;background:#4d4d4d;"></div>
<div class="r" style="left:1593px;top:250px;width:1px;height:23px;background:#4d4d4d;"></div>
<div class="r" style="left:1697px;top:250px;width:1px;height:23px;background:#4d4d4d;"></div>
<div class="r" style="left:1801px;top:250px;width:1px;height:23px;background:#4d4d4d;"></div>
<svg class="s" style="left:13px;top:253px;" width="18" height="18" viewBox="0 0 18 18"><path d="M17 1 V17 H1 Z" fill="#6b6b6b"/></svg>
<div class="t" style="left:80.23px;top:254.03px;font-size:16.5px;line-height:16.5px;color:#f0f0f0;transform:scaleX(0.8674);">A</div>
<div class="t" style="left:184.51px;top:254.03px;font-size:16.5px;line-height:16.5px;color:#f0f0f0;transform:scaleX(0.8155);">B</div>
<div class="t" style="left:288.60px;top:254.03px;font-size:16.5px;line-height:16.5px;color:#f0f0f0;transform:scaleX(0.7383);">C</div>
<div class="t" style="left:391.92px;top:254.03px;font-size:16.5px;line-height:16.5px;color:#f0f0f0;transform:scaleX(0.8519);">D</div>
<div class="t" style="left:496.97px;top:254.03px;font-size:16.5px;line-height:16.5px;color:#f0f0f0;transform:scaleX(0.7320);">E</div>
<div class="t" style="left:601.21px;top:254.03px;font-size:16.5px;line-height:16.5px;color:#f0f0f0;transform:scaleX(0.7523);">F</div>
<div class="t" style="left:703.80px;top:254.03px;font-size:16.5px;line-height:16.5px;color:#f0f0f0;transform:scaleX(0.8111);">G</div>
<div class="t" style="left:807.86px;top:254.03px;font-size:16.5px;line-height:16.5px;color:#f0f0f0;transform:scaleX(0.8627);">H</div>
<div class="t" style="left:914.92px;top:254.03px;font-size:16.5px;line-height:16.5px;color:#f0f0f0;transform:scaleX(0.9069);">I</div>
<div class="t" style="left:1018.37px;top:254.03px;font-size:16.5px;line-height:16.5px;color:#f0f0f0;transform:scaleX(0.6377);">J</div>
<div class="t" style="left:1120.71px;top:254.03px;font-size:16.5px;line-height:16.5px;color:#f0f0f0;transform:scaleX(0.7789);">K</div>
<div class="t" style="left:1225.53px;top:254.03px;font-size:16.5px;line-height:16.5px;color:#f0f0f0;transform:scaleX(0.7560);">L</div>
<div class="t" style="left:1325.95px;top:254.03px;font-size:16.5px;line-height:16.5px;color:#f0f0f0;transform:scaleX(1.0264);">M</div>
<div class="t" style="left:1431.67px;top:254.03px;font-size:16.5px;line-height:16.5px;color:#f0f0f0;transform:scaleX(0.8938);">N</div>
<div class="t" style="left:1535.54px;top:254.03px;font-size:16.5px;line-height:16.5px;color:#f0f0f0;transform:scaleX(0.8512);">O</div>
<div class="t" style="left:1640.74px;top:254.03px;font-size:16.5px;line-height:16.5px;color:#f0f0f0;transform:scaleX(0.7745);">P</div>
<div class="t" style="left:1743.45px;top:254.03px;font-size:16.5px;line-height:16.5px;color:#f0f0f0;transform:scaleX(0.8651);">Q</div>
<div class="t" style="left:1848.52px;top:254.03px;font-size:16.5px;line-height:16.5px;color:#f0f0f0;transform:scaleX(0.7518);">R</div>
<div class="r" style="left:0px;top:273px;width:1895px;height:1px;background:#9e9e9e;"></div>
<div class="r" style="left:969px;top:272px;width:105px;height:2px;background:#217346;"></div>
<div class="r" style="left:34px;top:274px;width:1861px;height:746px;background:#ffffff;"></div>
<div class="r" style="left:0px;top:274px;width:33px;height:746px;background:#262626;"></div>
<div class="r" style="left:33px;top:274px;width:1px;height:746px;background:#9e9e9e;"></div>
<div class="r" style="left:0px;top:585px;width:33px;height:24px;background:#666666;"></div>
<div class="r" style="left:32px;top:585px;width:2px;height:24px;background:#217346;"></div>
<div class="r" style="left:0px;top:297px;width:33px;height:1px;background:#5c5c5c;"></div>
<div class="r" style="left:0px;top:321px;width:33px;height:1px;background:#5c5c5c;"></div>
<div class="r" style="left:0px;top:345px;width:33px;height:1px;background:#5c5c5c;"></div>
<div class="r" style="left:0px;top:369px;width:33px;height:1px;background:#5c5c5c;"></div>
<div class="r" style="left:0px;top:393px;width:33px;height:1px;background:#5c5c5c;"></div>
<div class="r" style="left:0px;top:417px;width:33px;height:1px;background:#5c5c5c;"></div>
<div class="r" style="left:0px;top:441px;width:33px;height:1px;background:#5c5c5c;"></div>
<div class="r" style="left:0px;top:465px;width:33px;height:1px;background:#5c5c5c;"></div>
<div class="r" style="left:0px;top:489px;width:33px;height:1px;background:#5c5c5c;"></div>
<div class="r" style="left:0px;top:513px;width:33px;height:1px;background:#5c5c5c;"></div>
<div class="r" style="left:0px;top:537px;width:33px;height:1px;background:#5c5c5c;"></div>
<div class="r" style="left:0px;top:561px;width:33px;height:1px;background:#5c5c5c;"></div>
<div class="r" style="left:0px;top:585px;width:33px;height:1px;background:#aaaaaa;"></div>
<div class="r" style="left:0px;top:609px;width:33px;height:1px;background:#aaaaaa;"></div>
<div class="r" style="left:0px;top:633px;width:33px;height:1px;background:#5c5c5c;"></div>
<div class="r" style="left:0px;top:657px;width:33px;height:1px;background:#5c5c5c;"></div>
<div class="r" style="left:0px;top:681px;width:33px;height:1px;background:#5c5c5c;"></div>
<div class="r" style="left:0px;top:705px;width:33px;height:1px;background:#5c5c5c;"></div>
<div class="r" style="left:0px;top:729px;width:33px;height:1px;background:#5c5c5c;"></div>
<div class="r" style="left:0px;top:753px;width:33px;height:1px;background:#5c5c5c;"></div>
<div class="r" style="left:0px;top:777px;width:33px;height:1px;background:#5c5c5c;"></div>
<div class="r" style="left:0px;top:801px;width:33px;height:1px;background:#5c5c5c;"></div>
<div class="r" style="left:0px;top:825px;width:33px;height:1px;background:#5c5c5c;"></div>
<div class="r" style="left:0px;top:849px;width:33px;height:1px;background:#5c5c5c;"></div>
<div class="r" style="left:0px;top:873px;width:33px;height:1px;background:#5c5c5c;"></div>
<div class="r" style="left:0px;top:897px;width:33px;height:1px;background:#5c5c5c;"></div>
<div class="r" style="left:0px;top:921px;width:33px;height:1px;background:#5c5c5c;"></div>
<div class="r" style="left:0px;top:945px;width:33px;height:1px;background:#5c5c5c;"></div>
<div class="r" style="left:0px;top:969px;width:33px;height:1px;background:#5c5c5c;"></div>
<div class="r" style="left:0px;top:993px;width:33px;height:1px;background:#5c5c5c;"></div>
<div class="r" style="left:0px;top:1017px;width:33px;height:1px;background:#5c5c5c;"></div>
<div class="t" style="left:12.62px;top:278.03px;font-size:16.5px;line-height:16.5px;color:#f0f0f0;transform:scaleX(0.9117);">1</div>
<div class="t" style="left:12.62px;top:302.03px;font-size:16.5px;line-height:16.5px;color:#f0f0f0;transform:scaleX(0.9117);">2</div>
<div class="t" style="left:12.62px;top:326.03px;font-size:16.5px;line-height:16.5px;color:#f0f0f0;transform:scaleX(0.9117);">3</div>
<div class="t" style="left:12.62px;top:350.03px;font-size:16.5px;line-height:16.5px;color:#f0f0f0;transform:scaleX(0.9117);">4</div>
<div class="t" style="left:12.62px;top:374.03px;font-size:16.5px;line-height:16.5px;color:#f0f0f0;transform:scaleX(0.9117);">5</div>
<div class="t" style="left:12.62px;top:398.03px;font-size:16.5px;line-height:16.5px;color:#f0f0f0;transform:scaleX(0.9117);">6</div>
<div class="t" style="left:12.62px;top:422.03px;font-size:16.5px;line-height:16.5px;color:#f0f0f0;transform:scaleX(0.9117);">7</div>
<div class="t" style="left:12.62px;top:446.03px;font-size:16.5px;line-height:16.5px;color:#f0f0f0;transform:scaleX(0.9117);">8</div>
<div class="t" style="left:12.62px;top:470.03px;font-size:16.5px;line-height:16.5px;color:#f0f0f0;transform:scaleX(0.9117);">9</div>
<div class="t" style="left:8.43px;top:494.03px;font-size:16.5px;line-height:16.5px;color:#f0f0f0;transform:scaleX(0.9117);">10</div>
<div class="t" style="left:8.43px;top:518.03px;font-size:16.5px;line-height:16.5px;color:#f0f0f0;transform:scaleX(0.9769);">11</div>
<div class="t" style="left:8.43px;top:542.03px;font-size:16.5px;line-height:16.5px;color:#f0f0f0;transform:scaleX(0.9117);">12</div>
<div class="t" style="left:8.43px;top:566.03px;font-size:16.5px;line-height:16.5px;color:#f0f0f0;transform:scaleX(0.9117);">13</div>
<div class="t" style="left:8.43px;top:590.03px;font-size:16.5px;line-height:16.5px;color:#f0f0f0;transform:scaleX(0.9117);">14</div>
<div class="t" style="left:8.43px;top:614.03px;font-size:16.5px;line-height:16.5px;color:#f0f0f0;transform:scaleX(0.9117);">15</div>
<div class="t" style="left:8.43px;top:638.03px;font-size:16.5px;line-height:16.5px;color:#f0f0f0;transform:scaleX(0.9117);">16</div>
<div class="t" style="left:8.43px;top:662.03px;font-size:16.5px;line-height:16.5px;color:#f0f0f0;transform:scaleX(0.9117);">17</div>
<div class="t" style="left:8.43px;top:686.03px;font-size:16.5px;line-height:16.5px;color:#f0f0f0;transform:scaleX(0.9117);">18</div>
<div class="t" style="left:8.43px;top:710.03px;font-size:16.5px;line-height:16.5px;color:#f0f0f0;transform:scaleX(0.9117);">19</div>
<div class="t" style="left:8.43px;top:734.03px;font-size:16.5px;line-height:16.5px;color:#f0f0f0;transform:scaleX(0.9117);">20</div>
<div class="t" style="left:8.43px;top:758.03px;font-size:16.5px;line-height:16.5px;color:#f0f0f0;transform:scaleX(0.9117);">21</div>
<div class="t" style="left:8.43px;top:782.03px;font-size:16.5px;line-height:16.5px;color:#f0f0f0;transform:scaleX(0.9117);">22</div>
<div class="t" style="left:8.43px;top:806.03px;font-size:16.5px;line-height:16.5px;color:#f0f0f0;transform:scaleX(0.9117);">23</div>
<div class="t" style="left:8.43px;top:830.03px;font-size:16.5px;line-height:16.5px;color:#f0f0f0;transform:scaleX(0.9117);">24</div>
<div class="t" style="left:8.43px;top:854.03px;font-size:16.5px;line-height:16.5px;color:#f0f0f0;transform:scaleX(0.9117);">25</div>
<div class="t" style="left:8.43px;top:878.03px;font-size:16.5px;line-height:16.5px;color:#f0f0f0;transform:scaleX(0.9117);">26</div>
<div class="t" style="left:8.43px;top:902.03px;font-size:16.5px;line-height:16.5px;color:#f0f0f0;transform:scaleX(0.9117);">27</div>
<div class="t" style="left:8.43px;top:926.03px;font-size:16.5px;line-height:16.5px;color:#f0f0f0;transform:scaleX(0.9117);">28</div>
<div class="t" style="left:8.43px;top:950.03px;font-size:16.5px;line-height:16.5px;color:#f0f0f0;transform:scaleX(0.9117);">29</div>
<div class="t" style="left:8.43px;top:974.03px;font-size:16.5px;line-height:16.5px;color:#f0f0f0;transform:scaleX(0.9117);">30</div>
<div class="t" style="left:8.43px;top:998.03px;font-size:16.5px;line-height:16.5px;color:#f0f0f0;transform:scaleX(0.9117);">31</div>
<div class="r" style="left:34px;top:297px;width:1861px;height:1px;background:#d4d4d4;"></div>
<div class="r" style="left:34px;top:321px;width:1861px;height:1px;background:#d4d4d4;"></div>
<div class="r" style="left:34px;top:345px;width:1861px;height:1px;background:#d4d4d4;"></div>
<div class="r" style="left:34px;top:369px;width:1861px;height:1px;background:#d4d4d4;"></div>
<div class="r" style="left:34px;top:393px;width:1861px;height:1px;background:#d4d4d4;"></div>
<div class="r" style="left:34px;top:417px;width:1861px;height:1px;background:#d4d4d4;"></div>
<div class="r" style="left:34px;top:441px;width:1861px;height:1px;background:#d4d4d4;"></div>
<div class="r" style="left:34px;top:465px;width:1861px;height:1px;background:#d4d4d4;"></div>
<div class="r" style="left:34px;top:489px;width:1861px;height:1px;background:#d4d4d4;"></div>
<div class="r" style="left:34px;top:513px;width:1861px;height:1px;background:#d4d4d4;"></div>
<div class="r" style="left:34px;top:537px;width:1861px;height:1px;background:#d4d4d4;"></div>
<div class="r" style="left:34px;top:561px;width:1861px;height:1px;background:#d4d4d4;"></div>
<div class="r" style="left:34px;top:585px;width:1861px;height:1px;background:#d4d4d4;"></div>
<div class="r" style="left:34px;top:609px;width:1861px;height:1px;background:#d4d4d4;"></div>
<div class="r" style="left:34px;top:633px;width:1861px;height:1px;background:#d4d4d4;"></div>
<div class="r" style="left:34px;top:657px;width:1861px;height:1px;background:#d4d4d4;"></div>
<div class="r" style="left:34px;top:681px;width:1861px;height:1px;background:#d4d4d4;"></div>
<div class="r" style="left:34px;top:705px;width:1861px;height:1px;background:#d4d4d4;"></div>
<div class="r" style="left:34px;top:729px;width:1861px;height:1px;background:#d4d4d4;"></div>
<div class="r" style="left:34px;top:753px;width:1861px;height:1px;background:#d4d4d4;"></div>
<div class="r" style="left:34px;top:777px;width:1861px;height:1px;background:#d4d4d4;"></div>
<div class="r" style="left:34px;top:801px;width:1861px;height:1px;background:#d4d4d4;"></div>
<div class="r" style="left:34px;top:825px;width:1861px;height:1px;background:#d4d4d4;"></div>
<div class="r" style="left:34px;top:849px;width:1861px;height:1px;background:#d4d4d4;"></div>
<div class="r" style="left:34px;top:873px;width:1861px;height:1px;background:#d4d4d4;"></div>
<div class="r" style="left:34px;top:897px;width:1861px;height:1px;background:#d4d4d4;"></div>
<div class="r" style="left:34px;top:921px;width:1861px;height:1px;background:#d4d4d4;"></div>
<div class="r" style="left:34px;top:945px;width:1861px;height:1px;background:#d4d4d4;"></div>
<div class="r" style="left:34px;top:969px;width:1861px;height:1px;background:#d4d4d4;"></div>
<div class="r" style="left:34px;top:993px;width:1861px;height:1px;background:#d4d4d4;"></div>
<div class="r" style="left:34px;top:1017px;width:1861px;height:1px;background:#d4d4d4;"></div>
<div class="r" style="left:137px;top:274px;width:1px;height:24px;background:#d4d4d4;"></div>
<div class="r" style="left:137px;top:298px;width:1px;height:24px;background:#d4d4d4;"></div>
<div class="r" style="left:137px;top:322px;width:1px;height:24px;background:#d4d4d4;"></div>
<div class="r" style="left:137px;top:346px;width:1px;height:24px;background:#d4d4d4;"></div>
<div class="r" style="left:137px;top:370px;width:1px;height:24px;background:#d4d4d4;"></div>
<div class="r" style="left:137px;top:394px;width:1px;height:24px;background:#d4d4d4;"></div>
<div class="r" style="left:137px;top:418px;width:1px;height:24px;background:#d4d4d4;"></div>
<div class="r" style="left:137px;top:466px;width:1px;height:24px;background:#d4d4d4;"></div>
<div class="r" style="left:137px;top:514px;width:1px;height:24px;background:#d4d4d4;"></div>
<div class="r" style="left:137px;top:538px;width:1px;height:24px;background:#d4d4d4;"></div>
<div class="r" style="left:137px;top:562px;width:1px;height:24px;background:#d4d4d4;"></div>
<div class="r" style="left:137px;top:586px;width:1px;height:24px;background:#d4d4d4;"></div>
<div class="r" style="left:137px;top:610px;width:1px;height:24px;background:#d4d4d4;"></div>
<div class="r" style="left:137px;top:658px;width:1px;height:24px;background:#d4d4d4;"></div>
<div class="r" style="left:137px;top:682px;width:1px;height:24px;background:#d4d4d4;"></div>
<div class="r" style="left:137px;top:706px;width:1px;height:24px;background:#d4d4d4;"></div>
<div class="r" style="left:137px;top:730px;width:1px;height:24px;background:#d4d4d4;"></div>
<div class="r" style="left:137px;top:754px;width:1px;height:24px;background:#d4d4d4;"></div>
<div class="r" style="left:137px;top:778px;width:1px;height:24px;background:#d4d4d4;"></div>
<div class="r" style="left:137px;top:802px;width:1px;height:24px;background:#d4d4d4;"></div>
<div class="r" style="left:137px;top:826px;width:1px;height:24px;background:#d4d4d4;"></div>
<div class="r" style="left:137px;top:850px;width:1px;height:24px;background:#d4d4d4;"></div>
<div class="r" style="left:137px;top:874px;width:1px;height:24px;background:#d4d4d4;"></div>
<div class="r" style="left:137px;top:898px;width:1px;height:24px;background:#d4d4d4;"></div>
<div class="r" style="left:137px;top:922px;width:1px;height:24px;background:#d4d4d4;"></div>
<div class="r" style="left:137px;top:946px;width:1px;height:24px;background:#d4d4d4;"></div>
<div class="r" style="left:137px;top:970px;width:1px;height:24px;background:#d4d4d4;"></div>
<div class="r" style="left:137px;top:994px;width:1px;height:24px;background:#d4d4d4;"></div>
<div class="r" style="left:137px;top:1018px;width:1px;height:2px;background:#d4d4d4;"></div>
<div class="r" style="left:241px;top:274px;width:1px;height:24px;background:#d4d4d4;"></div>
<div class="r" style="left:241px;top:298px;width:1px;height:24px;background:#d4d4d4;"></div>
<div class="r" style="left:241px;top:322px;width:1px;height:24px;background:#d4d4d4;"></div>
<div class="r" style="left:241px;top:346px;width:1px;height:24px;background:#d4d4d4;"></div>
<div class="r" style="left:241px;top:370px;width:1px;height:24px;background:#d4d4d4;"></div>
<div class="r" style="left:241px;top:394px;width:1px;height:24px;background:#d4d4d4;"></div>
<div class="r" style="left:241px;top:418px;width:1px;height:24px;background:#d4d4d4;"></div>
<div class="r" style="left:241px;top:442px;width:1px;height:24px;background:#d4d4d4;"></div>
<div class="r" style="left:241px;top:466px;width:1px;height:24px;background:#d4d4d4;"></div>
<div class="r" style="left:241px;top:490px;width:1px;height:24px;background:#d4d4d4;"></div>
<div class="r" style="left:241px;top:514px;width:1px;height:24px;background:#d4d4d4;"></div>
<div class="r" style="left:241px;top:538px;width:1px;height:24px;background:#d4d4d4;"></div>
<div class="r" style="left:241px;top:562px;width:1px;height:24px;background:#d4d4d4;"></div>
<div class="r" style="left:241px;top:586px;width:1px;height:24px;background:#d4d4d4;"></div>
<div class="r" style="left:241px;top:610px;width:1px;height:24px;background:#d4d4d4;"></div>
<div class="r" style="left:241px;top:634px;width:1px;height:24px;background:#d4d4d4;"></div>
<div class="r" style="left:241px;top:658px;width:1px;height:24px;background:#d4d4d4;"></div>
<div class="r" style="left:241px;top:682px;width:1px;height:24px;background:#d4d4d4;"></div>
<div class="r" style="left:241px;top:706px;width:1px;height:24px;background:#d4d4d4;"></div>
<div class="r" style="left:241px;top:730px;width:1px;height:24px;background:#d4d4d4;"></div>
<div class="r" style="left:241px;top:754px;width:1px;height:24px;background:#d4d4d4;"></div>
<div class="r" style="left:241px;top:778px;width:1px;height:24px;background:#d4d4d4;"></div>
<div class="r" style="left:241px;top:802px;width:1px;height:24px;background:#d4d4d4;"></div>
<div class="r" style="left:241px;top:826px;width:1px;height:24px;background:#d4d4d4;"></div>
<div class="r" style="left:241px;top:850px;width:1px;height:24px;background:#d4d4d4;"></div>
<div class="r" style="left:241px;top:874px;width:1px;height:24px;background:#d4d4d4;"></div>
<div class="r" style="left:241px;top:898px;width:1px;height:24px;background:#d4d4d4;"></div>
<div class="r" style="left:241px;top:922px;width:1px;height:24px;background:#d4d4d4;"></div>
<div class="r" style="left:241px;top:946px;width:1px;height:24px;background:#d4d4d4;"></div>
<div class="r" style="left:241px;top:970px;width:1px;height:24px;background:#d4d4d4;"></div>
<div class="r" style="left:241px;top:994px;width:1px;height:24px;background:#d4d4d4;"></div>
<div class="r" style="left:241px;top:1018px;width:1px;height:2px;background:#d4d4d4;"></div>
<div class="r" style="left:345px;top:274px;width:1px;height:24px;background:#d4d4d4;"></div>
<div class="r" style="left:345px;top:298px;width:1px;height:24px;background:#d4d4d4;"></div>
<div class="r" style="left:345px;top:322px;width:1px;height:24px;background:#d4d4d4;"></div>
<div class="r" style="left:345px;top:346px;width:1px;height:24px;background:#d4d4d4;"></div>
<div class="r" style="left:345px;top:370px;width:1px;height:24px;background:#d4d4d4;"></div>
<div class="r" style="left:345px;top:394px;width:1px;height:24px;background:#d4d4d4;"></div>
<div class="r" style="left:345px;top:418px;width:1px;height:24px;background:#d4d4d4;"></div>
<div class="r" style="left:345px;top:442px;width:1px;height:24px;background:#d4d4d4;"></div>
<div class="r" style="left:345px;top:466px;width:1px;height:24px;background:#d4d4d4;"></div>
<div class="r" style="left:345px;top:490px;width:1px;height:24px;background:#d4d4d4;"></div>
<div class="r" style="left:345px;top:514px;width:1px;height:24px;background:#d4d4d4;"></div>
<div class="r" style="left:345px;top:538px;width:1px;height:24px;background:#d4d4d4;"></div>
<div class="r" style="left:345px;top:562px;width:1px;height:24px;background:#d4d4d4;"></div>
<div class="r" style="left:345px;top:586px;width:1px;height:24px;background:#d4d4d4;"></div>
<div class="r" style="left:345px;top:610px;width:1px;height:24px;background:#d4d4d4;"></div>
<div class="r" style="left:345px;top:634px;width:1px;height:24px;background:#d4d4d4;"></div>
<div class="r" style="left:345px;top:658px;width:1px;height:24px;background:#d4d4d4;"></div>
<div class="r" style="left:345px;top:682px;width:1px;height:24px;background:#d4d4d4;"></div>
<div class="r" style="left:345px;top:706px;width:1px;height:24px;background:#d4d4d4;"></div>
<div class="r" style="left:345px;top:730px;width:1px;height:24px;background:#d4d4d4;"></div>
<div class="r" style="left:345px;top:754px;width:1px;height:24px;background:#d4d4d4;"></div>
<div class="r" style="left:345px;top:778px;width:1px;height:24px;background:#d4d4d4;"></div>
<div class="r" style="left:345px;top:802px;width:1px;height:24px;background:#d4d4d4;"></div>
<div class="r" style="left:345px;top:826px;width:1px;height:24px;background:#d4d4d4;"></div>
<div class="r" style="left:345px;top:850px;width:1px;height:24px;background:#d4d4d4;"></div>
<div class="r" style="left:345px;top:874px;width:1px;height:24px;background:#d4d4d4;"></div>
<div class="r" style="left:345px;top:898px;width:1px;height:24px;background:#d4d4d4;"></div>
<div class="r" style="left:345px;top:922px;width:1px;height:24px;background:#d4d4d4;"></div>
<div class="r" style="left:345px;top:946px;width:1px;height:24px;background:#d4d4d4;"></div>
<div class="r" style="left:345px;top:970px;width:1px;height:24px;background:#d4d4d4;"></div>
<div class="r" style="left:345px;top:994px;width:1px;height:24px;background:#d4d4d4;"></div>
<div class="r" style="left:345px;top:1018px;width:1px;height:2px;background:#d4d4d4;"></div>
<div class="r" style="left:449px;top:274px;width:1px;height:24px;background:#d4d4d4;"></div>
<div class="r" style="left:449px;top:298px;width:1px;height:24px;background:#d4d4d4;"></div>
<div class="r" style="left:449px;top:322px;width:1px;height:24px;background:#d4d4d4;"></div>
<div class="r" style="left:449px;top:346px;width:1px;height:24px;background:#d4d4d4;"></div>
<div class="r" style="left:449px;top:370px;width:1px;height:24px;background:#d4d4d4;"></div>
<div class="r" style="left:449px;top:394px;width:1px;height:24px;background:#d4d4d4;"></div>
<div class="r" style="left:449px;top:418px;width:1px;height:24px;background:#d4d4d4;"></div>
<div class="r" style="left:449px;top:442px;width:1px;height:24px;background:#d4d4d4;"></div>
<div class="r" style="left:449px;top:466px;width:1px;height:24px;background:#d4d4d4;"></div>
<div class="r" style="left:449px;top:490px;width:1px;height:24px;background:#d4d4d4;"></div>
<div class="r" style="left:449px;top:514px;width:1px;height:24px;background:#d4d4d4;"></div>
<div class="r" style="left:449px;top:538px;width:1px;height:24px;background:#d4d4d4;"></div>
<div class="r" style="left:449px;top:562px;width:1px;height:24px;background:#d4d4d4;"></div>
<div class="r" style="left:449px;top:586px;width:1px;height:24px;background:#d4d4d4;"></div>
<div class="r" style="left:449px;top:610px;width:1px;height:24px;background:#d4d4d4;"></div>
<div class="r" style="left:449px;top:634px;width:1px;height:24px;background:#d4d4d4;"></div>
<div class="r" style="left:449px;top:658px;width:1px;height:24px;background:#d4d4d4;"></div>
<div class="r" style="left:449px;top:682px;width:1px;height:24px;background:#d4d4d4;"></div>
<div class="r" style="left:449px;top:706px;width:1px;height:24px;background:#d4d4d4;"></div>
<div class="r" style="left:449px;top:730px;width:1px;height:24px;background:#d4d4d4;"></div>
<div class="r" style="left:449px;top:754px;width:1px;height:24px;background:#d4d4d4;"></div>
<div class="r" style="left:449px;top:778px;width:1px;height:24px;background:#d4d4d4;"></div>
<div class="r" style="left:449px;top:802px;width:1px;height:24px;background:#d4d4d4;"></div>
<div class="r" style="left:449px;top:826px;width:1px;height:24px;background:#d4d4d4;"></div>
<div class="r" style="left:449px;top:850px;width:1px;height:24px;background:#d4d4d4;"></div>
<div class="r" style="left:449px;top:874px;width:1px;height:24px;background:#d4d4d4;"></div>
<div class="r" style="left:449px;top:898px;width:1px;height:24px;background:#d4d4d4;"></div>
<div class="r" style="left:449px;top:922px;width:1px;height:24px;background:#d4d4d4;"></div>
<div class="r" style="left:449px;top:946px;width:1px;height:24px;background:#d4d4d4;"></div>
<div class="r" style="left:449px;top:970px;width:1px;height:24px;background:#d4d4d4;"></div>
<div class="r" style="left:449px;top:994px;width:1px;height:24px;background:#d4d4d4;"></div>
<div class="r" style="left:449px;top:1018px;width:1px;height:2px;background:#d4d4d4;"></div>
<div class="r" style="left:553px;top:274px;width:1px;height:24px;background:#d4d4d4;"></div>
<div class="r" style="left:553px;top:298px;width:1px;height:24px;background:#d4d4d4;"></div>
<div class="r" style="left:553px;top:322px;width:1px;height:24px;background:#d4d4d4;"></div>
<div class="r" style="left:553px;top:346px;width:1px;height:24px;background:#d4d4d4;"></div>
<div class="r" style="left:553px;top:370px;width:1px;height:24px;background:#d4d4d4;"></div>
<div class="r" style="left:553px;top:394px;width:1px;height:24px;background:#d4d4d4;"></div>
<div class="r" style="left:553px;top:418px;width:1px;height:24px;background:#d4d4d4;"></div>
<div class="r" style="left:553px;top:442px;width:1px;height:24px;background:#d4d4d4;"></div>
<div class="r" style="left:553px;top:466px;width:1px;height:24px;background:#d4d4d4;"></div>
<div class="r" style="left:553px;top:490px;width:1px;height:24px;background:#d4d4d4;"></div>
<div class="r" style="left:553px;top:514px;width:1px;height:24px;background:#d4d4d4;"></div>
<div class="r" style="left:553px;top:538px;width:1px;height:24px;background:#d4d4d4;"></div>
<div class="r" style="left:553px;top:562px;width:1px;height:24px;background:#d4d4d4;"></div>
<div class="r" style="left:553px;top:586px;width:1px;height:24px;background:#d4d4d4;"></div>
<div class="r" style="left:553px;top:610px;width:1px;height:24px;background:#d4d4d4;"></div>
<div class="r" style="left:553px;top:634px;width:1px;height:24px;background:#d4d4d4;"></div>
<div class="r" style="left:553px;top:658px;width:1px;height:24px;background:#d4d4d4;"></div>
<div class="r" style="left:553px;top:682px;width:1px;height:24px;background:#d4d4d4;"></div>
<div class="r" style="left:553px;top:706px;width:1px;height:24px;background:#d4d4d4;"></div>
<div class="r" style="left:553px;top:730px;width:1px;height:24px;background:#d4d4d4;"></div>
<div class="r" style="left:553px;top:754px;width:1px;height:24px;background:#d4d4d4;"></div>
<div class="r" style="left:553px;top:778px;width:1px;height:24px;background:#d4d4d4;"></div>
<div class="r" style="left:553px;top:802px;width:1px;height:24px;background:#d4d4d4;"></div>
<div class="r" style="left:553px;top:826px;width:1px;height:24px;background:#d4d4d4;"></div>
<div class="r" style="left:553px;top:850px;width:1px;height:24px;background:#d4d4d4;"></div>
<div class="r" style="left:553px;top:874px;width:1px;height:24px;background:#d4d4d4;"></div>
<div class="r" style="left:553px;top:898px;width:1px;height:24px;background:#d4d4d4;"></div>
<div class="r" style="left:553px;top:922px;width:1px;height:24px;background:#d4d4d4;"></div>
<div class="r" style="left:553px;top:946px;width:1px;height:24px;background:#d4d4d4;"></div>
<div class="r" style="left:553px;top:970px;width:1px;height:24px;background:#d4d4d4;"></div>
<div class="r" style="left:553px;top:994px;width:1px;height:24px;background:#d4d4d4;"></div>
<div class="r" style="left:553px;top:1018px;width:1px;height:2px;background:#d4d4d4;"></div>
<div class="r" style="left:657px;top:274px;width:1px;height:24px;background:#d4d4d4;"></div>
<div class="r" style="left:657px;top:298px;width:1px;height:24px;background:#d4d4d4;"></div>
<div class="r" style="left:657px;top:322px;width:1px;height:24px;background:#d4d4d4;"></div>
<div class="r" style="left:657px;top:346px;width:1px;height:24px;background:#d4d4d4;"></div>
<div class="r" style="left:657px;top:370px;width:1px;height:24px;background:#d4d4d4;"></div>
<div class="r" style="left:657px;top:394px;width:1px;height:24px;background:#d4d4d4;"></div>
<div class="r" style="left:657px;top:418px;width:1px;height:24px;background:#d4d4d4;"></div>
<div class="r" style="left:657px;top:442px;width:1px;height:24px;background:#d4d4d4;"></div>
<div class="r" style="left:657px;top:466px;width:1px;height:24px;background:#d4d4d4;"></div>
<div class="r" style="left:657px;top:490px;width:1px;height:24px;background:#d4d4d4;"></div>
<div class="r" style="left:657px;top:514px;width:1px;height:24px;background:#d4d4d4;"></div>
<div class="r" style="left:657px;top:538px;width:1px;height:24px;background:#d4d4d4;"></div>
<div class="r" style="left:657px;top:562px;width:1px;height:24px;background:#d4d4d4;"></div>
<div class="r" style="left:657px;top:586px;width:1px;height:24px;background:#d4d4d4;"></div>
<div class="r" style="left:657px;top:610px;width:1px;height:24px;background:#d4d4d4;"></div>
<div class="r" style="left:657px;top:634px;width:1px;height:24px;background:#d4d4d4;"></div>
<div class="r" style="left:657px;top:658px;width:1px;height:24px;background:#d4d4d4;"></div>
<div class="r" style="left:657px;top:682px;width:1px;height:24px;background:#d4d4d4;"></div>
<div class="r" style="left:657px;top:706px;width:1px;height:24px;background:#d4d4d4;"></div>
<div class="r" style="left:657px;top:730px;width:1px;height:24px;background:#d4d4d4;"></div>
<div class="r" style="left:657px;top:754px;width:1px;height:24px;background:#d4d4d4;"></div>
<div class="r" style="left:657px;top:778px;width:1px;height:24px;background:#d4d4d4;"></div>
<div class="r" style="left:657px;top:802px;width:1px;height:24px;background:#d4d4d4;"></div>
<div class="r" style="left:657px;top:826px;width:1px;height:24px;background:#d4d4d4;"></div>
<div class="r" style="left:657px;top:850px;width:1px;height:24px;background:#d4d4d4;"></div>
<div class="r" style="left:657px;top:874px;width:1px;height:24px;background:#d4d4d4;"></div>
<div class="r" style="left:657px;top:898px;width:1px;height:24px;background:#d4d4d4;"></div>
<div class="r" style="left:657px;top:922px;width:1px;height:24px;background:#d4d4d4;"></div>
<div class="r" style="left:657px;top:946px;width:1px;height:24px;background:#d4d4d4;"></div>
<div class="r" style="left:657px;top:970px;width:1px;height:24px;background:#d4d4d4;"></div>
<div class="r" style="left:657px;top:994px;width:1px;height:24px;background:#d4d4d4;"></div>
<div class="r" style="left:657px;top:1018px;width:1px;height:2px;background:#d4d4d4;"></div>
<div class="r" style="left:761px;top:274px;width:1px;height:24px;background:#d4d4d4;"></div>
<div class="r" style="left:761px;top:298px;width:1px;height:24px;background:#d4d4d4;"></div>
<div class="r" style="left:761px;top:322px;width:1px;height:24px;background:#d4d4d4;"></div>
<div class="r" style="left:761px;top:346px;width:1px;height:24px;background:#d4d4d4;"></div>
<div class="r" style="left:761px;top:370px;width:1px;height:24px;background:#d4d4d4;"></div>
<div class="r" style="left:761px;top:394px;width:1px;height:24px;background:#d4d4d4;"></div>
<div class="r" style="left:761px;top:418px;width:1px;height:24px;background:#d4d4d4;"></div>
<div class="r" style="left:761px;top:442px;width:1px;height:24px;background:#d4d4d4;"></div>
<div class="r" style="left:761px;top:466px;width:1px;height:24px;background:#d4d4d4;"></div>
<div class="r" style="left:761px;top:490px;width:1px;height:24px;background:#d4d4d4;"></div>
<div class="r" style="left:761px;top:514px;width:1px;height:24px;background:#d4d4d4;"></div>
<div class="r" style="left:761px;top:538px;width:1px;height:24px;background:#d4d4d4;"></div>
<div class="r" style="left:761px;top:562px;width:1px;height:24px;background:#d4d4d4;"></div>
<div class="r" style="left:761px;top:586px;width:1px;height:24px;background:#d4d4d4;"></div>
<div class="r" style="left:761px;top:610px;width:1px;height:24px;background:#d4d4d4;"></div>
<div class="r" style="left:761px;top:634px;width:1px;height:24px;background:#d4d4d4;"></div>
<div class="r" style="left:761px;top:658px;width:1px;height:24px;background:#d4d4d4;"></div>
<div class="r" style="left:761px;top:682px;width:1px;height:24px;background:#d4d4d4;"></div>
<div class="r" style="left:761px;top:706px;width:1px;height:24px;background:#d4d4d4;"></div>
<div class="r" style="left:761px;top:730px;width:1px;height:24px;background:#d4d4d4;"></div>
<div class="r" style="left:761px;top:754px;width:1px;height:24px;background:#d4d4d4;"></div>
<div class="r" style="left:761px;top:778px;width:1px;height:24px;background:#d4d4d4;"></div>
<div class="r" style="left:761px;top:802px;width:1px;height:24px;background:#d4d4d4;"></div>
<div class="r" style="left:761px;top:826px;width:1px;height:24px;background:#d4d4d4;"></div>
<div class="r" style="left:761px;top:850px;width:1px;height:24px;background:#d4d4d4;"></div>
<div class="r" style="left:761px;top:874px;width:1px;height:24px;background:#d4d4d4;"></div>
<div class="r" style="left:761px;top:898px;width:1px;height:24px;background:#d4d4d4;"></div>
<div class="r" style="left:761px;top:922px;width:1px;height:24px;background:#d4d4d4;"></div>
<div class="r" style="left:761px;top:946px;width:1px;height:24px;background:#d4d4d4;"></div>
<div class="r" style="left:761px;top:970px;width:1px;height:24px;background:#d4d4d4;"></div>
<div class="r" style="left:761px;top:994px;width:1px;height:24px;background:#d4d4d4;"></div>
<div class="r" style="left:761px;top:1018px;width:1px;height:2px;background:#d4d4d4;"></div>
<div class="r" style="left:865px;top:298px;width:1px;height:24px;background:#d4d4d4;"></div>
<div class="r" style="left:865px;top:322px;width:1px;height:24px;background:#d4d4d4;"></div>
<div class="r" style="left:865px;top:346px;width:1px;height:24px;background:#d4d4d4;"></div>
<div class="r" style="left:865px;top:370px;width:1px;height:24px;background:#d4d4d4;"></div>
<div class="r" style="left:865px;top:394px;width:1px;height:24px;background:#d4d4d4;"></div>
<div class="r" style="left:865px;top:418px;width:1px;height:24px;background:#d4d4d4;"></div>
<div class="r" style="left:865px;top:442px;width:1px;height:24px;background:#d4d4d4;"></div>
<div class="r" style="left:865px;top:466px;width:1px;height:24px;background:#d4d4d4;"></div>
<div class="r" style="left:865px;top:490px;width:1px;height:24px;background:#d4d4d4;"></div>
<div class="r" style="left:865px;top:514px;width:1px;height:24px;background:#d4d4d4;"></div>
<div class="r" style="left:865px;top:538px;width:1px;height:24px;background:#d4d4d4;"></div>
<div class="r" style="left:865px;top:562px;width:1px;height:24px;background:#d4d4d4;"></div>
<div class="r" style="left:865px;top:586px;width:1px;height:24px;background:#d4d4d4;"></div>
<div class="r" style="left:865px;top:610px;width:1px;height:24px;background:#d4d4d4;"></div>
<div class="r" style="left:865px;top:634px;width:1px;height:24px;background:#d4d4d4;"></div>
<div class="r" style="left:865px;top:658px;width:1px;height:24px;background:#d4d4d4;"></div>
<div class="r" style="left:865px;top:682px;width:1px;height:24px;background:#d4d4d4;"></div>
<div class="r" style="left:865px;top:706px;width:1px;height:24px;background:#d4d4d4;"></div>
<div class="r" style="left:865px;top:730px;width:1px;height:24px;background:#d4d4d4;"></div>
<div class="r" style="left:865px;top:754px;width:1px;height:24px;background:#d4d4d4;"></div>
<div class="r" style="left:865px;top:778px;width:1px;height:24px;background:#d4d4d4;"></div>
<div class="r" style="left:865px;top:802px;width:1px;height:24px;background:#d4d4d4;"></div>
<div class="r" style="left:865px;top:826px;width:1px;height:24px;background:#d4d4d4;"></div>
<div class="r" style="left:865px;top:850px;width:1px;height:24px;background:#d4d4d4;"></div>
<div class="r" style="left:865px;top:874px;width:1px;height:24px;background:#d4d4d4;"></div>
<div class="r" style="left:865px;top:898px;width:1px;height:24px;background:#d4d4d4;"></div>
<div class="r" style="left:865px;top:922px;width:1px;height:24px;background:#d4d4d4;"></div>
<div class="r" style="left:865px;top:946px;width:1px;height:24px;background:#d4d4d4;"></div>
<div class="r" style="left:865px;top:970px;width:1px;height:24px;background:#d4d4d4;"></div>
<div class="r" style="left:865px;top:994px;width:1px;height:24px;background:#d4d4d4;"></div>
<div class="r" style="left:865px;top:1018px;width:1px;height:2px;background:#d4d4d4;"></div>
<div class="r" style="left:969px;top:274px;width:1px;height:24px;background:#d4d4d4;"></div>
<div class="r" style="left:969px;top:298px;width:1px;height:24px;background:#d4d4d4;"></div>
<div class="r" style="left:969px;top:322px;width:1px;height:24px;background:#d4d4d4;"></div>
<div class="r" style="left:969px;top:346px;width:1px;height:24px;background:#d4d4d4;"></div>
<div class="r" style="left:969px;top:370px;width:1px;height:24px;background:#d4d4d4;"></div>
<div class="r" style="left:969px;top:394px;width:1px;height:24px;background:#d4d4d4;"></div>
<div class="r" style="left:969px;top:418px;width:1px;height:24px;background:#d4d4d4;"></div>
<div class="r" style="left:969px;top:442px;width:1px;height:24px;background:#d4d4d4;"></div>
<div class="r" style="left:969px;top:466px;width:1px;height:24px;background:#d4d4d4;"></div>
<div class="r" style="left:969px;top:490px;width:1px;height:24px;background:#d4d4d4;"></div>
<div class="r" style="left:969px;top:514px;width:1px;height:24px;background:#d4d4d4;"></div>
<div class="r" style="left:969px;top:538px;width:1px;height:24px;background:#d4d4d4;"></div>
<div class="r" style="left:969px;top:562px;width:1px;height:24px;background:#d4d4d4;"></div>
<div class="r" style="left:969px;top:586px;width:1px;height:24px;background:#d4d4d4;"></div>
<div class="r" style="left:969px;top:610px;width:1px;height:24px;background:#d4d4d4;"></div>
<div class="r" style="left:969px;top:634px;width:1px;height:24px;background:#d4d4d4;"></div>
<div class="r" style="left:969px;top:658px;width:1px;height:24px;background:#d4d4d4;"></div>
<div class="r" style="left:969px;top:682px;width:1px;height:24px;background:#d4d4d4;"></div>
<div class="r" style="left:969px;top:706px;width:1px;height:24px;background:#d4d4d4;"></div>
<div class="r" style="left:969px;top:730px;width:1px;height:24px;background:#d4d4d4;"></div>
<div class="r" style="left:969px;top:754px;width:1px;height:24px;background:#d4d4d4;"></div>
<div class="r" style="left:969px;top:778px;width:1px;height:24px;background:#d4d4d4;"></div>
<div class="r" style="left:969px;top:802px;width:1px;height:24px;background:#d4d4d4;"></div>
<div class="r" style="left:969px;top:826px;width:1px;height:24px;background:#d4d4d4;"></div>
<div class="r" style="left:969px;top:850px;width:1px;height:24px;background:#d4d4d4;"></div>
<div class="r" style="left:969px;top:874px;width:1px;height:24px;background:#d4d4d4;"></div>
<div class="r" style="left:969px;top:898px;width:1px;height:24px;background:#d4d4d4;"></div>
<div class="r" style="left:969px;top:922px;width:1px;height:24px;background:#d4d4d4;"></div>
<div class="r" style="left:969px;top:946px;width:1px;height:24px;background:#d4d4d4;"></div>
<div class="r" style="left:969px;top:970px;width:1px;height:24px;background:#d4d4d4;"></div>
<div class="r" style="left:969px;top:994px;width:1px;height:24px;background:#d4d4d4;"></div>
<div class="r" style="left:969px;top:1018px;width:1px;height:2px;background:#d4d4d4;"></div>
<div class="r" style="left:1073px;top:274px;width:1px;height:24px;background:#d4d4d4;"></div>
<div class="r" style="left:1073px;top:298px;width:1px;height:24px;background:#d4d4d4;"></div>
<div class="r" style="left:1073px;top:322px;width:1px;height:24px;background:#d4d4d4;"></div>
<div class="r" style="left:1073px;top:346px;width:1px;height:24px;background:#d4d4d4;"></div>
<div class="r" style="left:1073px;top:370px;width:1px;height:24px;background:#d4d4d4;"></div>
<div class="r" style="left:1073px;top:394px;width:1px;height:24px;background:#d4d4d4;"></div>
<div class="r" style="left:1073px;top:418px;width:1px;height:24px;background:#d4d4d4;"></div>
<div class="r" style="left:1073px;top:442px;width:1px;height:24px;background:#d4d4d4;"></div>
<div class="r" style="left:1073px;top:466px;width:1px;height:24px;background:#d4d4d4;"></div>
<div class="r" style="left:1073px;top:490px;width:1px;height:24px;background:#d4d4d4;"></div>
<div class="r" style="left:1073px;top:514px;width:1px;height:24px;background:#d4d4d4;"></div>
<div class="r" style="left:1073px;top:538px;width:1px;height:24px;background:#d4d4d4;"></div>
<div class="r" style="left:1073px;top:562px;width:1px;height:24px;background:#d4d4d4;"></div>
<div class="r" style="left:1073px;top:586px;width:1px;height:24px;background:#d4d4d4;"></div>
<div class="r" style="left:1073px;top:610px;width:1px;height:24px;background:#d4d4d4;"></div>
<div class="r" style="left:1073px;top:634px;width:1px;height:24px;background:#d4d4d4;"></div>
<div class="r" style="left:1073px;top:658px;width:1px;height:24px;background:#d4d4d4;"></div>
<div class="r" style="left:1073px;top:682px;width:1px;height:24px;background:#d4d4d4;"></div>
<div class="r" style="left:1073px;top:706px;width:1px;height:24px;background:#d4d4d4;"></div>
<div class="r" style="left:1073px;top:730px;width:1px;height:24px;background:#d4d4d4;"></div>
<div class="r" style="left:1073px;top:754px;width:1px;height:24px;background:#d4d4d4;"></div>
<div class="r" style="left:1073px;top:778px;width:1px;height:24px;background:#d4d4d4;"></div>
<div class="r" style="left:1073px;top:802px;width:1px;height:24px;background:#d4d4d4;"></div>
<div class="r" style="left:1073px;top:826px;width:1px;height:24px;background:#d4d4d4;"></div>
<div class="r" style="left:1073px;top:850px;width:1px;height:24px;background:#d4d4d4;"></div>
<div class="r" style="left:1073px;top:874px;width:1px;height:24px;background:#d4d4d4;"></div>
<div class="r" style="left:1073px;top:898px;width:1px;height:24px;background:#d4d4d4;"></div>
<div class="r" style="left:1073px;top:922px;width:1px;height:24px;background:#d4d4d4;"></div>
<div class="r" style="left:1073px;top:946px;width:1px;height:24px;background:#d4d4d4;"></div>
<div class="r" style="left:1073px;top:970px;width:1px;height:24px;background:#d4d4d4;"></div>
<div class="r" style="left:1073px;top:994px;width:1px;height:24px;background:#d4d4d4;"></div>
<div class="r" style="left:1073px;top:1018px;width:1px;height:2px;background:#d4d4d4;"></div>
<div class="r" style="left:1177px;top:274px;width:1px;height:24px;background:#d4d4d4;"></div>
<div class="r" style="left:1177px;top:298px;width:1px;height:24px;background:#d4d4d4;"></div>
<div class="r" style="left:1177px;top:322px;width:1px;height:24px;background:#d4d4d4;"></div>
<div class="r" style="left:1177px;top:346px;width:1px;height:24px;background:#d4d4d4;"></div>
<div class="r" style="left:1177px;top:370px;width:1px;height:24px;background:#d4d4d4;"></div>
<div class="r" style="left:1177px;top:394px;width:1px;height:24px;background:#d4d4d4;"></div>
<div class="r" style="left:1177px;top:418px;width:1px;height:24px;background:#d4d4d4;"></div>
<div class="r" style="left:1177px;top:442px;width:1px;height:24px;background:#d4d4d4;"></div>
<div class="r" style="left:1177px;top:466px;width:1px;height:24px;background:#d4d4d4;"></div>
<div class="r" style="left:1177px;top:490px;width:1px;height:24px;background:#d4d4d4;"></div>
<div class="r" style="left:1177px;top:514px;width:1px;height:24px;background:#d4d4d4;"></div>
<div class="r" style="left:1177px;top:538px;width:1px;height:24px;background:#d4d4d4;"></div>
<div class="r" style="left:1177px;top:562px;width:1px;height:24px;background:#d4d4d4;"></div>
<div class="r" style="left:1177px;top:586px;width:1px;height:24px;background:#d4d4d4;"></div>
<div class="r" style="left:1177px;top:610px;width:1px;height:24px;background:#d4d4d4;"></div>
<div class="r" style="left:1177px;top:634px;width:1px;height:24px;background:#d4d4d4;"></div>
<div class="r" style="left:1177px;top:658px;width:1px;height:24px;background:#d4d4d4;"></div>
<div class="r" style="left:1177px;top:682px;width:1px;height:24px;background:#d4d4d4;"></div>
<div class="r" style="left:1177px;top:706px;width:1px;height:24px;background:#d4d4d4;"></div>
<div class="r" style="left:1177px;top:730px;width:1px;height:24px;background:#d4d4d4;"></div>
<div class="r" style="left:1177px;top:754px;width:1px;height:24px;background:#d4d4d4;"></div>
<div class="r" style="left:1177px;top:778px;width:1px;height:24px;background:#d4d4d4;"></div>
<div class="r" style="left:1177px;top:802px;width:1px;height:24px;background:#d4d4d4;"></div>
<div class="r" style="left:1177px;top:826px;width:1px;height:24px;background:#d4d4d4;"></div>
<div class="r" style="left:1177px;top:850px;width:1px;height:24px;background:#d4d4d4;"></div>
<div class="r" style="left:1177px;top:874px;width:1px;height:24px;background:#d4d4d4;"></div>
<div class="r" style="left:1177px;top:898px;width:1px;height:24px;background:#d4d4d4;"></div>
<div class="r" style="left:1177px;top:922px;width:1px;height:24px;background:#d4d4d4;"></div>
<div class="r" style="left:1177px;top:946px;width:1px;height:24px;background:#d4d4d4;"></div>
<div class="r" style="left:1177px;top:970px;width:1px;height:24px;background:#d4d4d4;"></div>
<div class="r" style="left:1177px;top:994px;width:1px;height:24px;background:#d4d4d4;"></div>
<div class="r" style="left:1177px;top:1018px;width:1px;height:2px;background:#d4d4d4;"></div>
<div class="r" style="left:1281px;top:274px;width:1px;height:24px;background:#d4d4d4;"></div>
<div class="r" style="left:1281px;top:298px;width:1px;height:24px;background:#d4d4d4;"></div>
<div class="r" style="left:1281px;top:322px;width:1px;height:24px;background:#d4d4d4;"></div>
<div class="r" style="left:1281px;top:346px;width:1px;height:24px;background:#d4d4d4;"></div>
<div class="r" style="left:1281px;top:370px;width:1px;height:24px;background:#d4d4d4;"></div>
<div class="r" style="left:1281px;top:394px;width:1px;height:24px;background:#d4d4d4;"></div>
<div class="r" style="left:1281px;top:418px;width:1px;height:24px;background:#d4d4d4;"></div>
<div class="r" style="left:1281px;top:442px;width:1px;height:24px;background:#d4d4d4;"></div>
<div class="r" style="left:1281px;top:466px;width:1px;height:24px;background:#d4d4d4;"></div>
<div class="r" style="left:1281px;top:490px;width:1px;height:24px;background:#d4d4d4;"></div>
<div class="r" style="left:1281px;top:514px;width:1px;height:24px;background:#d4d4d4;"></div>
<div class="r" style="left:1281px;top:538px;width:1px;height:24px;background:#d4d4d4;"></div>
<div class="r" style="left:1281px;top:562px;width:1px;height:24px;background:#d4d4d4;"></div>
<div class="r" style="left:1281px;top:586px;width:1px;height:24px;background:#d4d4d4;"></div>
<div class="r" style="left:1281px;top:610px;width:1px;height:24px;background:#d4d4d4;"></div>
<div class="r" style="left:1281px;top:634px;width:1px;height:24px;background:#d4d4d4;"></div>
<div class="r" style="left:1281px;top:658px;width:1px;height:24px;background:#d4d4d4;"></div>
<div class="r" style="left:1281px;top:682px;width:1px;height:24px;background:#d4d4d4;"></div>
<div class="r" style="left:1281px;top:706px;width:1px;height:24px;background:#d4d4d4;"></div>
<div class="r" style="left:1281px;top:730px;width:1px;height:24px;background:#d4d4d4;"></div>
<div class="r" style="left:1281px;top:754px;width:1px;height:24px;background:#d4d4d4;"></div>
<div class="r" style="left:1281px;top:778px;width:1px;height:24px;background:#d4d4d4;"></div>
<div class="r" style="left:1281px;top:802px;width:1px;height:24px;background:#d4d4d4;"></div>
<div class="r" style="left:1281px;top:826px;width:1px;height:24px;background:#d4d4d4;"></div>
<div class="r" style="left:1281px;top:850px;width:1px;height:24px;background:#d4d4d4;"></div>
<div class="r" style="left:1281px;top:874px;width:1px;height:24px;background:#d4d4d4;"></div>
<div class="r" style="left:1281px;top:898px;width:1px;height:24px;background:#d4d4d4;"></div>
<div class="r" style="left:1281px;top:922px;width:1px;height:24px;background:#d4d4d4;"></div>
<div class="r" style="left:1281px;top:946px;width:1px;height:24px;background:#d4d4d4;"></div>
<div class="r" style="left:1281px;top:970px;width:1px;height:24px;background:#d4d4d4;"></div>
<div class="r" style="left:1281px;top:994px;width:1px;height:24px;background:#d4d4d4;"></div>
<div class="r" style="left:1281px;top:1018px;width:1px;height:2px;background:#d4d4d4;"></div>
<div class="r" style="left:1385px;top:274px;width:1px;height:24px;background:#d4d4d4;"></div>
<div class="r" style="left:1385px;top:298px;width:1px;height:24px;background:#d4d4d4;"></div>
<div class="r" style="left:1385px;top:322px;width:1px;height:24px;background:#d4d4d4;"></div>
<div class="r" style="left:1385px;top:346px;width:1px;height:24px;background:#d4d4d4;"></div>
<div class="r" style="left:1385px;top:370px;width:1px;height:24px;background:#d4d4d4;"></div>
<div class="r" style="left:1385px;top:394px;width:1px;height:24px;background:#d4d4d4;"></div>
<div class="r" style="left:1385px;top:418px;width:1px;height:24px;background:#d4d4d4;"></div>
<div class="r" style="left:1385px;top:442px;width:1px;height:24px;background:#d4d4d4;"></div>
<div class="r" style="left:1385px;top:466px;width:1px;height:24px;background:#d4d4d4;"></div>
<div class="r" style="left:1385px;top:490px;width:1px;height:24px;background:#d4d4d4;"></div>
<div class="r" style="left:1385px;top:514px;width:1px;height:24px;background:#d4d4d4;"></div>
<div class="r" style="left:1385px;top:538px;width:1px;height:24px;background:#d4d4d4;"></div>
<div class="r" style="left:1385px;top:562px;width:1px;height:24px;background:#d4d4d4;"></div>
<div class="r" style="left:1385px;top:586px;width:1px;height:24px;background:#d4d4d4;"></div>
<div class="r" style="left:1385px;top:610px;width:1px;height:24px;background:#d4d4d4;"></div>
<div class="r" style="left:1385px;top:634px;width:1px;height:24px;background:#d4d4d4;"></div>
<div class="r" style="left:1385px;top:658px;width:1px;height:24px;background:#d4d4d4;"></div>
<div class="r" style="left:1385px;top:682px;width:1px;height:24px;background:#d4d4d4;"></div>
<div class="r" style="left:1385px;top:706px;width:1px;height:24px;background:#d4d4d4;"></div>
<div class="r" style="left:1385px;top:730px;width:1px;height:24px;background:#d4d4d4;"></div>
<div class="r" style="left:1385px;top:754px;width:1px;height:24px;background:#d4d4d4;"></div>
<div class="r" style="left:1385px;top:778px;width:1px;height:24px;background:#d4d4d4;"></div>
<div class="r" style="left:1385px;top:802px;width:1px;height:24px;background:#d4d4d4;"></div>
<div class="r" style="left:1385px;top:826px;width:1px;height:24px;background:#d4d4d4;"></div>
<div class="r" style="left:1385px;top:850px;width:1px;height:24px;background:#d4d4d4;"></div>
<div class="r" style="left:1385px;top:874px;width:1px;height:24px;background:#d4d4d4;"></div>
<div class="r" style="left:1385px;top:898px;width:1px;height:24px;background:#d4d4d4;"></div>
<div class="r" style="left:1385px;top:922px;width:1px;height:24px;background:#d4d4d4;"></div>
<div class="r" style="left:1385px;top:946px;width:1px;height:24px;background:#d4d4d4;"></div>
<div class="r" style="left:1385px;top:970px;width:1px;height:24px;background:#d4d4d4;"></div>
<div class="r" style="left:1385px;top:994px;width:1px;height:24px;background:#d4d4d4;"></div>
<div class="r" style="left:1385px;top:1018px;width:1px;height:2px;background:#d4d4d4;"></div>
<div class="r" style="left:1489px;top:274px;width:1px;height:24px;background:#d4d4d4;"></div>
<div class="r" style="left:1489px;top:298px;width:1px;height:24px;background:#d4d4d4;"></div>
<div class="r" style="left:1489px;top:322px;width:1px;height:24px;background:#d4d4d4;"></div>
<div class="r" style="left:1489px;top:346px;width:1px;height:24px;background:#d4d4d4;"></div>
<div class="r" style="left:1489px;top:370px;width:1px;height:24px;background:#d4d4d4;"></div>
<div class="r" style="left:1489px;top:394px;width:1px;height:24px;background:#d4d4d4;"></div>
<div class="r" style="left:1489px;top:418px;width:1px;height:24px;background:#d4d4d4;"></div>
<div class="r" style="left:1489px;top:442px;width:1px;height:24px;background:#d4d4d4;"></div>
<div class="r" style="left:1489px;top:466px;width:1px;height:24px;background:#d4d4d4;"></div>
<div class="r" style="left:1489px;top:490px;width:1px;height:24px;background:#d4d4d4;"></div>
<div class="r" style="left:1489px;top:514px;width:1px;height:24px;background:#d4d4d4;"></div>
<div class="r" style="left:1489px;top:538px;width:1px;height:24px;background:#d4d4d4;"></div>
<div class="r" style="left:1489px;top:562px;width:1px;height:24px;background:#d4d4d4;"></div>
<div class="r" style="left:1489px;top:586px;width:1px;height:24px;background:#d4d4d4;"></div>
<div class="r" style="left:1489px;top:610px;width:1px;height:24px;background:#d4d4d4;"></div>
<div class="r" style="left:1489px;top:634px;width:1px;height:24px;background:#d4d4d4;"></div>
<div class="r" style="left:1489px;top:658px;width:1px;height:24px;background:#d4d4d4;"></div>
<div class="r" style="left:1489px;top:682px;width:1px;height:24px;background:#d4d4d4;"></div>
<div class="r" style="left:1489px;top:706px;width:1px;height:24px;background:#d4d4d4;"></div>
<div class="r" style="left:1489px;top:730px;width:1px;height:24px;background:#d4d4d4;"></div>
<div class="r" style="left:1489px;top:754px;width:1px;height:24px;background:#d4d4d4;"></div>
<div class="r" style="left:1489px;top:778px;width:1px;height:24px;background:#d4d4d4;"></div>
<div class="r" style="left:1489px;top:802px;width:1px;height:24px;background:#d4d4d4;"></div>
<div class="r" style="left:1489px;top:826px;width:1px;height:24px;background:#d4d4d4;"></div>
<div class="r" style="left:1489px;top:850px;width:1px;height:24px;background:#d4d4d4;"></div>
<div class="r" style="left:1489px;top:874px;width:1px;height:24px;background:#d4d4d4;"></div>
<div class="r" style="left:1489px;top:898px;width:1px;height:24px;background:#d4d4d4;"></div>
<div class="r" style="left:1489px;top:922px;width:1px;height:24px;background:#d4d4d4;"></div>
<div class="r" style="left:1489px;top:946px;width:1px;height:24px;background:#d4d4d4;"></div>
<div class="r" style="left:1489px;top:970px;width:1px;height:24px;background:#d4d4d4;"></div>
<div class="r" style="left:1489px;top:994px;width:1px;height:24px;background:#d4d4d4;"></div>
<div class="r" style="left:1489px;top:1018px;width:1px;height:2px;background:#d4d4d4;"></div>
<div class="r" style="left:1593px;top:274px;width:1px;height:24px;background:#d4d4d4;"></div>
<div class="r" style="left:1593px;top:298px;width:1px;height:24px;background:#d4d4d4;"></div>
<div class="r" style="left:1593px;top:322px;width:1px;height:24px;background:#d4d4d4;"></div>
<div class="r" style="left:1593px;top:346px;width:1px;height:24px;background:#d4d4d4;"></div>
<div class="r" style="left:1593px;top:370px;width:1px;height:24px;background:#d4d4d4;"></div>
<div class="r" style="left:1593px;top:394px;width:1px;height:24px;background:#d4d4d4;"></div>
<div class="r" style="left:1593px;top:418px;width:1px;height:24px;background:#d4d4d4;"></div>
<div class="r" style="left:1593px;top:442px;width:1px;height:24px;background:#d4d4d4;"></div>
<div class="r" style="left:1593px;top:466px;width:1px;height:24px;background:#d4d4d4;"></div>
<div class="r" style="left:1593px;top:490px;width:1px;height:24px;background:#d4d4d4;"></div>
<div class="r" style="left:1593px;top:514px;width:1px;height:24px;background:#d4d4d4;"></div>
<div class="r" style="left:1593px;top:538px;width:1px;height:24px;background:#d4d4d4;"></div>
<div class="r" style="left:1593px;top:562px;width:1px;height:24px;background:#d4d4d4;"></div>
<div class="r" style="left:1593px;top:586px;width:1px;height:24px;background:#d4d4d4;"></div>
<div class="r" style="left:1593px;top:610px;width:1px;height:24px;background:#d4d4d4;"></div>
<div class="r" style="left:1593px;top:634px;width:1px;height:24px;background:#d4d4d4;"></div>
<div class="r" style="left:1593px;top:658px;width:1px;height:24px;background:#d4d4d4;"></div>
<div class="r" style="left:1593px;top:682px;width:1px;height:24px;background:#d4d4d4;"></div>
<div class="r" style="left:1593px;top:706px;width:1px;height:24px;background:#d4d4d4;"></div>
<div class="r" style="left:1593px;top:730px;width:1px;height:24px;background:#d4d4d4;"></div>
<div class="r" style="left:1593px;top:754px;width:1px;height:24px;background:#d4d4d4;"></div>
<div class="r" style="left:1593px;top:778px;width:1px;height:24px;background:#d4d4d4;"></div>
<div class="r" style="left:1593px;top:802px;width:1px;height:24px;background:#d4d4d4;"></div>
<div class="r" style="left:1593px;top:826px;width:1px;height:24px;background:#d4d4d4;"></div>
<div class="r" style="left:1593px;top:850px;width:1px;height:24px;background:#d4d4d4;"></div>
<div class="r" style="left:1593px;top:874px;width:1px;height:24px;background:#d4d4d4;"></div>
<div class="r" style="left:1593px;top:898px;width:1px;height:24px;background:#d4d4d4;"></div>
<div class="r" style="left:1593px;top:922px;width:1px;height:24px;background:#d4d4d4;"></div>
<div class="r" style="left:1593px;top:946px;width:1px;height:24px;background:#d4d4d4;"></div>
<div class="r" style="left:1593px;top:970px;width:1px;height:24px;background:#d4d4d4;"></div>
<div class="r" style="left:1593px;top:994px;width:1px;height:24px;background:#d4d4d4;"></div>
<div class="r" style="left:1593px;top:1018px;width:1px;height:2px;background:#d4d4d4;"></div>
<div class="r" style="left:1697px;top:274px;width:1px;height:24px;background:#d4d4d4;"></div>
<div class="r" style="left:1697px;top:298px;width:1px;height:24px;background:#d4d4d4;"></div>
<div class="r" style="left:1697px;top:322px;width:1px;height:24px;background:#d4d4d4;"></div>
<div class="r" style="left:1697px;top:346px;width:1px;height:24px;background:#d4d4d4;"></div>
<div class="r" style="left:1697px;top:370px;width:1px;height:24px;background:#d4d4d4;"></div>
<div class="r" style="left:1697px;top:394px;width:1px;height:24px;background:#d4d4d4;"></div>
<div class="r" style="left:1697px;top:418px;width:1px;height:24px;background:#d4d4d4;"></div>
<div class="r" style="left:1697px;top:442px;width:1px;height:24px;background:#d4d4d4;"></div>
<div class="r" style="left:1697px;top:466px;width:1px;height:24px;background:#d4d4d4;"></div>
<div class="r" style="left:1697px;top:490px;width:1px;height:24px;background:#d4d4d4;"></div>
<div class="r" style="left:1697px;top:514px;width:1px;height:24px;background:#d4d4d4;"></div>
<div class="r" style="left:1697px;top:538px;width:1px;height:24px;background:#d4d4d4;"></div>
<div class="r" style="left:1697px;top:562px;width:1px;height:24px;background:#d4d4d4;"></div>
<div class="r" style="left:1697px;top:586px;width:1px;height:24px;background:#d4d4d4;"></div>
<div class="r" style="left:1697px;top:610px;width:1px;height:24px;background:#d4d4d4;"></div>
<div class="r" style="left:1697px;top:634px;width:1px;height:24px;background:#d4d4d4;"></div>
<div class="r" style="left:1697px;top:658px;width:1px;height:24px;background:#d4d4d4;"></div>
<div class="r" style="left:1697px;top:682px;width:1px;height:24px;background:#d4d4d4;"></div>
<div class="r" style="left:1697px;top:706px;width:1px;height:24px;background:#d4d4d4;"></div>
<div class="r" style="left:1697px;top:730px;width:1px;height:24px;background:#d4d4d4;"></div>
<div class="r" style="left:1697px;top:754px;width:1px;height:24px;background:#d4d4d4;"></div>
<div class="r" style="left:1697px;top:778px;width:1px;height:24px;background:#d4d4d4;"></div>
<div class="r" style="left:1697px;top:802px;width:1px;height:24px;background:#d4d4d4;"></div>
<div class="r" style="left:1697px;top:826px;width:1px;height:24px;background:#d4d4d4;"></div>
<div class="r" style="left:1697px;top:850px;width:1px;height:24px;background:#d4d4d4;"></div>
<div class="r" style="left:1697px;top:874px;width:1px;height:24px;background:#d4d4d4;"></div>
<div class="r" style="left:1697px;top:898px;width:1px;height:24px;background:#d4d4d4;"></div>
<div class="r" style="left:1697px;top:922px;width:1px;height:24px;background:#d4d4d4;"></div>
<div class="r" style="left:1697px;top:946px;width:1px;height:24px;background:#d4d4d4;"></div>
<div class="r" style="left:1697px;top:970px;width:1px;height:24px;background:#d4d4d4;"></div>
<div class="r" style="left:1697px;top:994px;width:1px;height:24px;background:#d4d4d4;"></div>
<div class="r" style="left:1697px;top:1018px;width:1px;height:2px;background:#d4d4d4;"></div>
<div class="r" style="left:1801px;top:274px;width:1px;height:24px;background:#d4d4d4;"></div>
<div class="r" style="left:1801px;top:298px;width:1px;height:24px;background:#d4d4d4;"></div>
<div class="r" style="left:1801px;top:322px;width:1px;height:24px;background:#d4d4d4;"></div>
<div class="r" style="left:1801px;top:346px;width:1px;height:24px;background:#d4d4d4;"></div>
<div class="r" style="left:1801px;top:370px;width:1px;height:24px;background:#d4d4d4;"></div>
<div class="r" style="left:1801px;top:394px;width:1px;height:24px;background:#d4d4d4;"></div>
<div class="r" style="left:1801px;top:418px;width:1px;height:24px;background:#d4d4d4;"></div>
<div class="r" style="left:1801px;top:442px;width:1px;height:24px;background:#d4d4d4;"></div>
<div class="r" style="left:1801px;top:466px;width:1px;height:24px;background:#d4d4d4;"></div>
<div class="r" style="left:1801px;top:490px;width:1px;height:24px;background:#d4d4d4;"></div>
<div class="r" style="left:1801px;top:514px;width:1px;height:24px;background:#d4d4d4;"></div>
<div class="r" style="left:1801px;top:538px;width:1px;height:24px;background:#d4d4d4;"></div>
<div class="r" style="left:1801px;top:562px;width:1px;height:24px;background:#d4d4d4;"></div>
<div class="r" style="left:1801px;top:586px;width:1px;height:24px;background:#d4d4d4;"></div>
<div class="r" style="left:1801px;top:610px;width:1px;height:24px;background:#d4d4d4;"></div>
<div class="r" style="left:1801px;top:634px;width:1px;height:24px;background:#d4d4d4;"></div>
<div class="r" style="left:1801px;top:658px;width:1px;height:24px;background:#d4d4d4;"></div>
<div class="r" style="left:1801px;top:682px;width:1px;height:24px;background:#d4d4d4;"></div>
<div class="r" style="left:1801px;top:706px;width:1px;height:24px;background:#d4d4d4;"></div>
<div class="r" style="left:1801px;top:730px;width:1px;height:24px;background:#d4d4d4;"></div>
<div class="r" style="left:1801px;top:754px;width:1px;height:24px;background:#d4d4d4;"></div>
<div class="r" style="left:1801px;top:778px;width:1px;height:24px;background:#d4d4d4;"></div>
<div class="r" style="left:1801px;top:802px;width:1px;height:24px;background:#d4d4d4;"></div>
<div class="r" style="left:1801px;top:826px;width:1px;height:24px;background:#d4d4d4;"></div>
<div class="r" style="left:1801px;top:850px;width:1px;height:24px;background:#d4d4d4;"></div>
<div class="r" style="left:1801px;top:874px;width:1px;height:24px;background:#d4d4d4;"></div>
<div class="r" style="left:1801px;top:898px;width:1px;height:24px;background:#d4d4d4;"></div>
<div class="r" style="left:1801px;top:922px;width:1px;height:24px;background:#d4d4d4;"></div>
<div class="r" style="left:1801px;top:946px;width:1px;height:24px;background:#d4d4d4;"></div>
<div class="r" style="left:1801px;top:970px;width:1px;height:24px;background:#d4d4d4;"></div>
<div class="r" style="left:1801px;top:994px;width:1px;height:24px;background:#d4d4d4;"></div>
<div class="r" style="left:1801px;top:1018px;width:1px;height:2px;background:#d4d4d4;"></div>
<div style="position:absolute;left:37px;top:274px;width:100px;height:24px;overflow:hidden;">
<div class="t" style="left:0.00px;top:4.79px;font-size:15.6px;line-height:15.6px;color:#000;transform:scaleX(1.0285);">Transaction ID</div>
</div>
<div style="position:absolute;left:141px;top:274px;width:100px;height:24px;overflow:hidden;">
<div class="t" style="left:0.00px;top:4.79px;font-size:15.6px;line-height:15.6px;color:#000;transform:scaleX(1.1019);">Item</div>
</div>
<div style="position:absolute;left:245px;top:274px;width:100px;height:24px;overflow:hidden;">
<div class="t" style="left:0.00px;top:4.79px;font-size:15.6px;line-height:15.6px;color:#000;transform:scaleX(1.0861);">Quantity</div>
</div>
<div style="position:absolute;left:349px;top:274px;width:100px;height:24px;overflow:hidden;">
<div class="t" style="left:0.00px;top:4.79px;font-size:15.6px;line-height:15.6px;color:#000;transform:scaleX(1.0259);">Price Per Unit</div>
</div>
<div style="position:absolute;left:453px;top:274px;width:100px;height:24px;overflow:hidden;">
<div class="t" style="left:0.00px;top:4.79px;font-size:15.6px;line-height:15.6px;color:#000;transform:scaleX(1.0523);">Total Spent</div>
</div>
<div style="position:absolute;left:557px;top:274px;width:100px;height:24px;overflow:hidden;">
<div class="t" style="left:0.00px;top:4.79px;font-size:15.6px;line-height:15.6px;color:#000;transform:scaleX(1.0682);">Payment Method</div>
</div>
<div style="position:absolute;left:661px;top:274px;width:100px;height:24px;overflow:hidden;">
<div class="t" style="left:0.00px;top:4.79px;font-size:15.6px;line-height:15.6px;color:#000;transform:scaleX(1.0434);">Location</div>
</div>
<div class="t" style="left:765.00px;top:278.79px;font-size:15.6px;line-height:15.6px;color:#000;transform:scaleX(1.0366);">Transaction Date</div>
<div style="position:absolute;left:37px;top:298px;width:100px;height:24px;overflow:hidden;">
<div class="t" style="left:0.00px;top:4.79px;font-size:15.6px;line-height:15.6px;color:#000;transform:scaleX(1.0052);">TXN_1961373</div>
</div>
<div style="position:absolute;left:141px;top:298px;width:100px;height:24px;overflow:hidden;">
<div class="t" style="left:0.00px;top:4.79px;font-size:15.6px;line-height:15.6px;color:#000;transform:scaleX(1.0360);">Coffee</div>
</div>
<div class="t" style="left:333.00px;top:302.79px;font-size:15.6px;line-height:15.6px;color:#000;transform:scaleX(1.0370);">2</div>
<div class="t" style="left:437.00px;top:302.79px;font-size:15.6px;line-height:15.6px;color:#000;transform:scaleX(1.0370);">2</div>
<div class="t" style="left:541.00px;top:302.79px;font-size:15.6px;line-height:15.6px;color:#000;transform:scaleX(1.0370);">4</div>
<div style="position:absolute;left:557px;top:298px;width:100px;height:24px;overflow:hidden;">
<div class="t" style="left:0.00px;top:4.79px;font-size:15.6px;line-height:15.6px;color:#000;transform:scaleX(1.0197);">Credit Card</div>
</div>
<div style="position:absolute;left:661px;top:298px;width:100px;height:24px;overflow:hidden;">
<div class="t" style="left:0.00px;top:4.79px;font-size:15.6px;line-height:15.6px;color:#000;transform:scaleX(1.0348);">Takeaway</div>
</div>
<div class="t" style="left:794.29px;top:302.79px;font-size:15.6px;line-height:15.6px;color:#000;transform:scaleX(1.1151);">9/8/2023</div>
<div style="position:absolute;left:37px;top:322px;width:100px;height:24px;overflow:hidden;">
<div class="t" style="left:0.00px;top:4.79px;font-size:15.6px;line-height:15.6px;color:#000;transform:scaleX(1.0052);">TXN_4977031</div>
</div>
<div style="position:absolute;left:141px;top:322px;width:100px;height:24px;overflow:hidden;">
<div class="t" style="left:0.00px;top:4.79px;font-size:15.6px;line-height:15.6px;color:#000;transform:scaleX(0.9575);">Cake</div>
</div>
<div class="t" style="left:333.00px;top:326.79px;font-size:15.6px;line-height:15.6px;color:#000;transform:scaleX(1.0370);">4</div>
<div class="t" style="left:437.00px;top:326.79px;font-size:15.6px;line-height:15.6px;color:#000;transform:scaleX(1.0370);">3</div>
<div class="t" style="left:532.01px;top:326.79px;font-size:15.6px;line-height:15.6px;color:#000;transform:scaleX(1.0370);">12</div>
<div style="position:absolute;left:557px;top:322px;width:100px;height:24px;overflow:hidden;">
<div class="t" style="left:0.00px;top:4.79px;font-size:15.6px;line-height:15.6px;color:#000;transform:scaleX(0.9401);">Cash</div>
</div>
<div style="position:absolute;left:661px;top:322px;width:100px;height:24px;overflow:hidden;">
<div class="t" style="left:0.00px;top:4.79px;font-size:15.6px;line-height:15.6px;color:#000;transform:scaleX(1.0684);">In-store</div>
</div>
<div class="t" style="left:785.30px;top:326.79px;font-size:15.6px;line-height:15.6px;color:#000;transform:scaleX(1.1053);">5/16/2023</div>
<div style="position:absolute;left:37px;top:346px;width:100px;height:24px;overflow:hidden;">
<div class="t" style="left:0.00px;top:4.79px;font-size:15.6px;line-height:15.6px;color:#000;transform:scaleX(1.0052);">TXN_4271903</div>
</div>
<div style="position:absolute;left:141px;top:346px;width:100px;height:24px;overflow:hidden;">
<div class="t" style="left:0.00px;top:4.79px;font-size:15.6px;line-height:15.6px;color:#000;transform:scaleX(1.0124);">Cookie</div>
</div>
<div class="t" style="left:333.00px;top:350.79px;font-size:15.6px;line-height:15.6px;color:#000;transform:scaleX(1.0370);">4</div>
<div class="t" style="left:437.00px;top:350.79px;font-size:15.6px;line-height:15.6px;color:#000;transform:scaleX(1.0370);">1</div>
<div style="position:absolute;left:557px;top:346px;width:100px;height:24px;overflow:hidden;">
<div class="t" style="left:0.00px;top:4.79px;font-size:15.6px;line-height:15.6px;color:#000;transform:scaleX(1.0197);">Credit Card</div>
</div>
<div style="position:absolute;left:661px;top:346px;width:100px;height:24px;overflow:hidden;">
<div class="t" style="left:0.00px;top:4.79px;font-size:15.6px;line-height:15.6px;color:#000;transform:scaleX(1.0684);">In-store</div>
</div>
<div class="t" style="left:785.30px;top:350.79px;font-size:15.6px;line-height:15.6px;color:#000;transform:scaleX(1.1053);">7/19/2023</div>
<div style="position:absolute;left:37px;top:370px;width:100px;height:24px;overflow:hidden;">
<div class="t" style="left:0.00px;top:4.79px;font-size:15.6px;line-height:15.6px;color:#000;transform:scaleX(1.0052);">TXN_7034554</div>
</div>
<div style="position:absolute;left:141px;top:370px;width:100px;height:24px;overflow:hidden;">
<div class="t" style="left:0.00px;top:4.79px;font-size:15.6px;line-height:15.6px;color:#000;transform:scaleX(0.9665);">Salad</div>
</div>
<div class="t" style="left:333.00px;top:374.79px;font-size:15.6px;line-height:15.6px;color:#000;transform:scaleX(1.0370);">2</div>
<div class="t" style="left:437.00px;top:374.79px;font-size:15.6px;line-height:15.6px;color:#000;transform:scaleX(1.0370);">5</div>
<div class="t" style="left:532.01px;top:374.79px;font-size:15.6px;line-height:15.6px;color:#000;transform:scaleX(1.0370);">10</div>
<div class="t" style="left:785.30px;top:374.79px;font-size:15.6px;line-height:15.6px;color:#000;transform:scaleX(1.1053);">4/27/2023</div>
<div style="position:absolute;left:37px;top:394px;width:100px;height:24px;overflow:hidden;">
<div class="t" style="left:0.00px;top:4.79px;font-size:15.6px;line-height:15.6px;color:#000;transform:scaleX(1.0169);">TXN_3160411</div>
</div>
<div style="position:absolute;left:141px;top:394px;width:100px;height:24px;overflow:hidden;">
<div class="t" style="left:0.00px;top:4.79px;font-size:15.6px;line-height:15.6px;color:#000;transform:scaleX(1.0360);">Coffee</div>
</div>
<div class="t" style="left:333.00px;top:398.79px;font-size:15.6px;line-height:15.6px;color:#000;transform:scaleX(1.0370);">2</div>
<div class="t" style="left:437.00px;top:398.79px;font-size:15.6px;line-height:15.6px;color:#000;transform:scaleX(1.0370);">2</div>
<div class="t" style="left:541.00px;top:398.79px;font-size:15.6px;line-height:15.6px;color:#000;transform:scaleX(1.0370);">4</div>
<div style="position:absolute;left:557px;top:394px;width:100px;height:24px;overflow:hidden;">
<div class="t" style="left:0.00px;top:4.79px;font-size:15.6px;line-height:15.6px;color:#000;transform:scaleX(1.0744);">Digital Wallet</div>
</div>
<div style="position:absolute;left:661px;top:394px;width:100px;height:24px;overflow:hidden;">
<div class="t" style="left:0.00px;top:4.79px;font-size:15.6px;line-height:15.6px;color:#000;transform:scaleX(1.0684);">In-store</div>
</div>
<div class="t" style="left:785.30px;top:398.79px;font-size:15.6px;line-height:15.6px;color:#000;transform:scaleX(1.1241);">6/11/2023</div>
<div style="position:absolute;left:37px;top:418px;width:100px;height:24px;overflow:hidden;">
<div class="t" style="left:0.00px;top:4.79px;font-size:15.6px;line-height:15.6px;color:#000;transform:scaleX(1.0052);">TXN_2602893</div>
</div>
<div style="position:absolute;left:141px;top:418px;width:100px;height:24px;overflow:hidden;">
<div class="t" style="left:0.00px;top:4.79px;font-size:15.6px;line-height:15.6px;color:#000;transform:scaleX(1.0506);">Smoothie</div>
</div>
<div class="t" style="left:333.00px;top:422.79px;font-size:15.6px;line-height:15.6px;color:#000;transform:scaleX(1.0370);">5</div>
<div class="t" style="left:437.00px;top:422.79px;font-size:15.6px;line-height:15.6px;color:#000;transform:scaleX(1.0370);">4</div>
<div class="t" style="left:532.01px;top:422.79px;font-size:15.6px;line-height:15.6px;color:#000;transform:scaleX(1.0370);">20</div>
<div class="t" style="left:557.00px;top:422.79px;font-size:15.6px;line-height:15.6px;color:#000;transform:scaleX(1.0197);">Credit Card</div>
<div class="t" style="left:785.30px;top:422.79px;font-size:15.6px;line-height:15.6px;color:#000;transform:scaleX(1.1053);">3/31/2023</div>
<div class="t" style="left:37.00px;top:446.79px;font-size:15.6px;line-height:15.6px;color:#000;transform:scaleX(1.0169);">TXN_4433211</div>
<div class="t" style="left:333.00px;top:446.79px;font-size:15.6px;line-height:15.6px;color:#000;transform:scaleX(1.0370);">3</div>
<div class="t" style="left:437.00px;top:446.79px;font-size:15.6px;line-height:15.6px;color:#000;transform:scaleX(1.0370);">3</div>
<div class="t" style="left:541.00px;top:446.79px;font-size:15.6px;line-height:15.6px;color:#000;transform:scaleX(1.0370);">9</div>
<div style="position:absolute;left:661px;top:442px;width:100px;height:24px;overflow:hidden;">
<div class="t" style="left:0.00px;top:4.79px;font-size:15.6px;line-height:15.6px;color:#000;transform:scaleX(1.0348);">Takeaway</div>
</div>
<div class="t" style="left:785.30px;top:446.79px;font-size:15.6px;line-height:15.6px;color:#000;transform:scaleX(1.1053);">10/6/2023</div>
<div style="position:absolute;left:37px;top:466px;width:100px;height:24px;overflow:hidden;">
<div class="t" style="left:0.00px;top:4.79px;font-size:15.6px;line-height:15.6px;color:#000;transform:scaleX(1.0052);">TXN_6699534</div>
</div>
<div style="position:absolute;left:141px;top:466px;width:100px;height:24px;overflow:hidden;">
<div class="t" style="left:0.00px;top:4.79px;font-size:15.6px;line-height:15.6px;color:#000;transform:scaleX(1.0187);">Sandwich</div>
</div>
<div class="t" style="left:333.00px;top:470.79px;font-size:15.6px;line-height:15.6px;color:#000;transform:scaleX(1.0370);">4</div>
<div class="t" style="left:437.00px;top:470.79px;font-size:15.6px;line-height:15.6px;color:#000;transform:scaleX(1.0370);">4</div>
<div class="t" style="left:532.01px;top:470.79px;font-size:15.6px;line-height:15.6px;color:#000;transform:scaleX(1.0370);">16</div>
<div class="t" style="left:557.00px;top:470.79px;font-size:15.6px;line-height:15.6px;color:#000;transform:scaleX(0.9401);">Cash</div>
<div class="t" style="left:776.30px;top:470.79px;font-size:15.6px;line-height:15.6px;color:#000;transform:scaleX(1.0977);">10/28/2023</div>
<div class="t" style="left:37.00px;top:494.79px;font-size:15.6px;line-height:15.6px;color:#000;transform:scaleX(1.0052);">TXN_4717867</div>
<div class="t" style="left:333.00px;top:494.79px;font-size:15.6px;line-height:15.6px;color:#000;transform:scaleX(1.0370);">5</div>
<div class="t" style="left:437.00px;top:494.79px;font-size:15.6px;line-height:15.6px;color:#000;transform:scaleX(1.0370);">3</div>
<div class="t" style="left:532.01px;top:494.79px;font-size:15.6px;line-height:15.6px;color:#000;transform:scaleX(1.0370);">15</div>
<div style="position:absolute;left:661px;top:490px;width:100px;height:24px;overflow:hidden;">
<div class="t" style="left:0.00px;top:4.79px;font-size:15.6px;line-height:15.6px;color:#000;transform:scaleX(1.0348);">Takeaway</div>
</div>
<div class="t" style="left:785.30px;top:494.79px;font-size:15.6px;line-height:15.6px;color:#000;transform:scaleX(1.1053);">7/28/2023</div>
<div style="position:absolute;left:37px;top:514px;width:100px;height:24px;overflow:hidden;">
<div class="t" style="left:0.00px;top:4.79px;font-size:15.6px;line-height:15.6px;color:#000;transform:scaleX(1.0052);">TXN_2064365</div>
</div>
<div style="position:absolute;left:141px;top:514px;width:100px;height:24px;overflow:hidden;">
<div class="t" style="left:0.00px;top:4.79px;font-size:15.6px;line-height:15.6px;color:#000;transform:scaleX(1.0187);">Sandwich</div>
</div>
<div class="t" style="left:333.00px;top:518.79px;font-size:15.6px;line-height:15.6px;color:#000;transform:scaleX(1.0370);">5</div>
<div class="t" style="left:437.00px;top:518.79px;font-size:15.6px;line-height:15.6px;color:#000;transform:scaleX(1.0370);">4</div>
<div class="t" style="left:532.01px;top:518.79px;font-size:15.6px;line-height:15.6px;color:#000;transform:scaleX(1.0370);">20</div>
<div style="position:absolute;left:661px;top:514px;width:100px;height:24px;overflow:hidden;">
<div class="t" style="left:0.00px;top:4.79px;font-size:15.6px;line-height:15.6px;color:#000;transform:scaleX(1.0684);">In-store</div>
</div>
<div class="t" style="left:776.30px;top:518.79px;font-size:15.6px;line-height:15.6px;color:#000;transform:scaleX(1.0977);">12/31/2023</div>
<div style="position:absolute;left:37px;top:538px;width:100px;height:24px;overflow:hidden;">
<div class="t" style="left:0.00px;top:4.79px;font-size:15.6px;line-height:15.6px;color:#000;transform:scaleX(1.0052);">TXN_2548360</div>
</div>
<div style="position:absolute;left:141px;top:538px;width:100px;height:24px;overflow:hidden;">
<div class="t" style="left:0.00px;top:4.79px;font-size:15.6px;line-height:15.6px;color:#000;transform:scaleX(0.9665);">Salad</div>
</div>
<div class="t" style="left:333.00px;top:542.79px;font-size:15.6px;line-height:15.6px;color:#000;transform:scaleX(1.0370);">5</div>
<div class="t" style="left:437.00px;top:542.79px;font-size:15.6px;line-height:15.6px;color:#000;transform:scaleX(1.0370);">5</div>
<div class="t" style="left:532.01px;top:542.79px;font-size:15.6px;line-height:15.6px;color:#000;transform:scaleX(1.0370);">25</div>
<div style="position:absolute;left:557px;top:538px;width:100px;height:24px;overflow:hidden;">
<div class="t" style="left:0.00px;top:4.79px;font-size:15.6px;line-height:15.6px;color:#000;transform:scaleX(0.9401);">Cash</div>
</div>
<div style="position:absolute;left:661px;top:538px;width:100px;height:24px;overflow:hidden;">
<div class="t" style="left:0.00px;top:4.79px;font-size:15.6px;line-height:15.6px;color:#000;transform:scaleX(1.0348);">Takeaway</div>
</div>
<div class="t" style="left:785.30px;top:542.79px;font-size:15.6px;line-height:15.6px;color:#000;transform:scaleX(1.1241);">11/7/2023</div>
<div style="position:absolute;left:37px;top:562px;width:100px;height:24px;overflow:hidden;">
<div class="t" style="left:0.00px;top:4.79px;font-size:15.6px;line-height:15.6px;color:#000;transform:scaleX(1.0052);">TXN_3051279</div>
</div>
<div style="position:absolute;left:141px;top:562px;width:100px;height:24px;overflow:hidden;">
<div class="t" style="left:0.00px;top:4.79px;font-size:15.6px;line-height:15.6px;color:#000;transform:scaleX(1.0187);">Sandwich</div>
</div>
<div class="t" style="left:333.00px;top:566.79px;font-size:15.6px;line-height:15.6px;color:#000;transform:scaleX(1.0370);">2</div>
<div class="t" style="left:437.00px;top:566.79px;font-size:15.6px;line-height:15.6px;color:#000;transform:scaleX(1.0370);">4</div>
<div class="t" style="left:541.00px;top:566.79px;font-size:15.6px;line-height:15.6px;color:#000;transform:scaleX(1.0370);">8</div>
<div style="position:absolute;left:557px;top:562px;width:100px;height:24px;overflow:hidden;">
<div class="t" style="left:0.00px;top:4.79px;font-size:15.6px;line-height:15.6px;color:#000;transform:scaleX(1.0197);">Credit Card</div>
</div>
<div class="t" style="left:661.00px;top:566.79px;font-size:15.6px;line-height:15.6px;color:#000;transform:scaleX(1.0348);">Takeaway</div>
<div style="position:absolute;left:37px;top:586px;width:100px;height:24px;overflow:hidden;">
<div class="t" style="left:0.00px;top:4.79px;font-size:15.6px;line-height:15.6px;color:#000;transform:scaleX(1.0052);">TXN_7619095</div>
</div>
<div style="position:absolute;left:141px;top:586px;width:100px;height:24px;overflow:hidden;">
<div class="t" style="left:0.00px;top:4.79px;font-size:15.6px;line-height:15.6px;color:#000;transform:scaleX(1.0187);">Sandwich</div>
</div>
<div class="t" style="left:333.00px;top:590.79px;font-size:15.6px;line-height:15.6px;color:#000;transform:scaleX(1.0370);">2</div>
<div class="t" style="left:437.00px;top:590.79px;font-size:15.6px;line-height:15.6px;color:#000;transform:scaleX(1.0370);">4</div>
<div class="t" style="left:541.00px;top:590.79px;font-size:15.6px;line-height:15.6px;color:#000;transform:scaleX(1.0370);">8</div>
<div style="position:absolute;left:557px;top:586px;width:100px;height:24px;overflow:hidden;">
<div class="t" style="left:0.00px;top:4.79px;font-size:15.6px;line-height:15.6px;color:#000;transform:scaleX(0.9401);">Cash</div>
</div>
<div style="position:absolute;left:661px;top:586px;width:100px;height:24px;overflow:hidden;">
<div class="t" style="left:0.00px;top:4.79px;font-size:15.6px;line-height:15.6px;color:#000;transform:scaleX(1.0684);">In-store</div>
</div>
<div class="t" style="left:794.29px;top:590.79px;font-size:15.6px;line-height:15.6px;color:#000;transform:scaleX(1.1151);">5/3/2023</div>
<div style="position:absolute;left:37px;top:610px;width:100px;height:24px;overflow:hidden;">
<div class="t" style="left:0.00px;top:4.79px;font-size:15.6px;line-height:15.6px;color:#000;transform:scaleX(1.0052);">TXN_9437049</div>
</div>
<div style="position:absolute;left:141px;top:610px;width:100px;height:24px;overflow:hidden;">
<div class="t" style="left:0.00px;top:4.79px;font-size:15.6px;line-height:15.6px;color:#000;transform:scaleX(1.0124);">Cookie</div>
</div>
<div class="t" style="left:333.00px;top:614.79px;font-size:15.6px;line-height:15.6px;color:#000;transform:scaleX(1.0370);">5</div>
<div class="t" style="left:437.00px;top:614.79px;font-size:15.6px;line-height:15.6px;color:#000;transform:scaleX(1.0370);">1</div>
<div class="t" style="left:541.00px;top:614.79px;font-size:15.6px;line-height:15.6px;color:#000;transform:scaleX(1.0370);">5</div>
<div style="position:absolute;left:661px;top:610px;width:100px;height:24px;overflow:hidden;">
<div class="t" style="left:0.00px;top:4.79px;font-size:15.6px;line-height:15.6px;color:#000;transform:scaleX(1.0348);">Takeaway</div>
</div>
<div class="t" style="left:794.29px;top:614.79px;font-size:15.6px;line-height:15.6px;color:#000;transform:scaleX(1.1151);">6/1/2023</div>
<div class="t" style="left:37.00px;top:638.79px;font-size:15.6px;line-height:15.6px;color:#000;transform:scaleX(1.0052);">TXN_8915701</div>
<div class="t" style="left:333.00px;top:638.79px;font-size:15.6px;line-height:15.6px;color:#000;transform:scaleX(1.0370);">2</div>
<div class="t" style="left:423.53px;top:638.79px;font-size:15.6px;line-height:15.6px;color:#000;transform:scaleX(1.0364);">1.5</div>
<div class="t" style="left:541.00px;top:638.79px;font-size:15.6px;line-height:15.6px;color:#000;transform:scaleX(1.0370);">3</div>
<div style="position:absolute;left:661px;top:634px;width:100px;height:24px;overflow:hidden;">
<div class="t" style="left:0.00px;top:4.79px;font-size:15.6px;line-height:15.6px;color:#000;transform:scaleX(1.0684);">In-store</div>
</div>
<div class="t" style="left:785.30px;top:638.79px;font-size:15.6px;line-height:15.6px;color:#000;transform:scaleX(1.1053);">3/21/2023</div>
<div style="position:absolute;left:37px;top:658px;width:100px;height:24px;overflow:hidden;">
<div class="t" style="left:0.00px;top:4.79px;font-size:15.6px;line-height:15.6px;color:#000;transform:scaleX(1.0052);">TXN_2847255</div>
</div>
<div style="position:absolute;left:141px;top:658px;width:100px;height:24px;overflow:hidden;">
<div class="t" style="left:0.00px;top:4.79px;font-size:15.6px;line-height:15.6px;color:#000;transform:scaleX(0.9665);">Salad</div>
</div>
<div class="t" style="left:333.00px;top:662.79px;font-size:15.6px;line-height:15.6px;color:#000;transform:scaleX(1.0370);">3</div>
<div class="t" style="left:437.00px;top:662.79px;font-size:15.6px;line-height:15.6px;color:#000;transform:scaleX(1.0370);">5</div>
<div class="t" style="left:532.01px;top:662.79px;font-size:15.6px;line-height:15.6px;color:#000;transform:scaleX(1.0370);">15</div>
<div style="position:absolute;left:557px;top:658px;width:100px;height:24px;overflow:hidden;">
<div class="t" style="left:0.00px;top:4.79px;font-size:15.6px;line-height:15.6px;color:#000;transform:scaleX(1.0197);">Credit Card</div>
</div>
<div style="position:absolute;left:661px;top:658px;width:100px;height:24px;overflow:hidden;">
<div class="t" style="left:0.00px;top:4.79px;font-size:15.6px;line-height:15.6px;color:#000;transform:scaleX(1.0684);">In-store</div>
</div>
<div class="t" style="left:776.30px;top:662.79px;font-size:15.6px;line-height:15.6px;color:#000;transform:scaleX(1.1143);">11/15/2023</div>
<div style="position:absolute;left:37px;top:682px;width:100px;height:24px;overflow:hidden;">
<div class="t" style="left:0.00px;top:4.79px;font-size:15.6px;line-height:15.6px;color:#000;transform:scaleX(1.0052);">TXN_3765707</div>
</div>
<div style="position:absolute;left:141px;top:682px;width:100px;height:24px;overflow:hidden;">
<div class="t" style="left:0.00px;top:4.79px;font-size:15.6px;line-height:15.6px;color:#000;transform:scaleX(1.0187);">Sandwich</div>
</div>
<div class="t" style="left:333.00px;top:686.79px;font-size:15.6px;line-height:15.6px;color:#000;transform:scaleX(1.0370);">1</div>
<div class="t" style="left:437.00px;top:686.79px;font-size:15.6px;line-height:15.6px;color:#000;transform:scaleX(1.0370);">4</div>
<div class="t" style="left:541.00px;top:686.79px;font-size:15.6px;line-height:15.6px;color:#000;transform:scaleX(1.0370);">4</div>
<div class="t" style="left:785.30px;top:686.79px;font-size:15.6px;line-height:15.6px;color:#000;transform:scaleX(1.1053);">6/10/2023</div>
<div style="position:absolute;left:37px;top:706px;width:100px;height:24px;overflow:hidden;">
<div class="t" style="left:0.00px;top:4.79px;font-size:15.6px;line-height:15.6px;color:#000;transform:scaleX(1.0052);">TXN_6769710</div>
</div>
<div style="position:absolute;left:141px;top:706px;width:100px;height:24px;overflow:hidden;">
<div class="t" style="left:0.00px;top:4.79px;font-size:15.6px;line-height:15.6px;color:#000;transform:scaleX(0.9720);">Juice</div>
</div>
<div class="t" style="left:333.00px;top:710.79px;font-size:15.6px;line-height:15.6px;color:#000;transform:scaleX(1.0370);">2</div>
<div class="t" style="left:437.00px;top:710.79px;font-size:15.6px;line-height:15.6px;color:#000;transform:scaleX(1.0370);">3</div>
<div class="t" style="left:541.00px;top:710.79px;font-size:15.6px;line-height:15.6px;color:#000;transform:scaleX(1.0370);">6</div>
<div style="position:absolute;left:557px;top:706px;width:100px;height:24px;overflow:hidden;">
<div class="t" style="left:0.00px;top:4.79px;font-size:15.6px;line-height:15.6px;color:#000;transform:scaleX(0.9401);">Cash</div>
</div>
<div style="position:absolute;left:661px;top:706px;width:100px;height:24px;overflow:hidden;">
<div class="t" style="left:0.00px;top:4.79px;font-size:15.6px;line-height:15.6px;color:#000;transform:scaleX(1.0684);">In-store</div>
</div>
<div class="t" style="left:785.30px;top:710.79px;font-size:15.6px;line-height:15.6px;color:#000;transform:scaleX(1.1053);">2/24/2023</div>
<div style="position:absolute;left:37px;top:730px;width:100px;height:24px;overflow:hidden;">
<div class="t" style="left:0.00px;top:4.79px;font-size:15.6px;line-height:15.6px;color:#000;transform:scaleX(1.0052);">TXN_8876618</div>
</div>
<div style="position:absolute;left:141px;top:730px;width:100px;height:24px;overflow:hidden;">
<div class="t" style="left:0.00px;top:4.79px;font-size:15.6px;line-height:15.6px;color:#000;transform:scaleX(0.9575);">Cake</div>
</div>
<div class="t" style="left:333.00px;top:734.79px;font-size:15.6px;line-height:15.6px;color:#000;transform:scaleX(1.0370);">5</div>
<div class="t" style="left:437.00px;top:734.79px;font-size:15.6px;line-height:15.6px;color:#000;transform:scaleX(1.0370);">3</div>
<div class="t" style="left:532.01px;top:734.79px;font-size:15.6px;line-height:15.6px;color:#000;transform:scaleX(1.0370);">15</div>
<div class="t" style="left:557.00px;top:734.79px;font-size:15.6px;line-height:15.6px;color:#000;transform:scaleX(0.9401);">Cash</div>
<div class="t" style="left:785.30px;top:734.79px;font-size:15.6px;line-height:15.6px;color:#000;transform:scaleX(1.1053);">3/25/2023</div>
<div style="position:absolute;left:37px;top:754px;width:100px;height:24px;overflow:hidden;">
<div class="t" style="left:0.00px;top:4.79px;font-size:15.6px;line-height:15.6px;color:#000;transform:scaleX(1.0052);">TXN_3709394</div>
</div>
<div style="position:absolute;left:141px;top:754px;width:100px;height:24px;overflow:hidden;">
<div class="t" style="left:0.00px;top:4.79px;font-size:15.6px;line-height:15.6px;color:#000;transform:scaleX(0.9720);">Juice</div>
</div>
<div class="t" style="left:333.00px;top:758.79px;font-size:15.6px;line-height:15.6px;color:#000;transform:scaleX(1.0370);">4</div>
<div class="t" style="left:437.00px;top:758.79px;font-size:15.6px;line-height:15.6px;color:#000;transform:scaleX(1.0370);">3</div>
<div class="t" style="left:532.01px;top:758.79px;font-size:15.6px;line-height:15.6px;color:#000;transform:scaleX(1.0370);">12</div>
<div style="position:absolute;left:557px;top:754px;width:100px;height:24px;overflow:hidden;">
<div class="t" style="left:0.00px;top:4.79px;font-size:15.6px;line-height:15.6px;color:#000;transform:scaleX(0.9401);">Cash</div>
</div>
<div style="position:absolute;left:661px;top:754px;width:100px;height:24px;overflow:hidden;">
<div class="t" style="left:0.00px;top:4.79px;font-size:15.6px;line-height:15.6px;color:#000;transform:scaleX(1.0348);">Takeaway</div>
</div>
<div class="t" style="left:785.30px;top:758.79px;font-size:15.6px;line-height:15.6px;color:#000;transform:scaleX(1.1053);">1/15/2023</div>
<div style="position:absolute;left:37px;top:778px;width:100px;height:24px;overflow:hidden;">
<div class="t" style="left:0.00px;top:4.79px;font-size:15.6px;line-height:15.6px;color:#000;transform:scaleX(1.0052);">TXN_3522028</div>
</div>
<div class="t" style="left:141.00px;top:782.79px;font-size:15.6px;line-height:15.6px;color:#000;transform:scaleX(1.0506);">Smoothie</div>
<div class="t" style="left:437.00px;top:782.79px;font-size:15.6px;line-height:15.6px;color:#000;transform:scaleX(1.0370);">4</div>
<div class="t" style="left:532.01px;top:782.79px;font-size:15.6px;line-height:15.6px;color:#000;transform:scaleX(1.0370);">20</div>
<div style="position:absolute;left:557px;top:778px;width:100px;height:24px;overflow:hidden;">
<div class="t" style="left:0.00px;top:4.79px;font-size:15.6px;line-height:15.6px;color:#000;transform:scaleX(0.9401);">Cash</div>
</div>
<div style="position:absolute;left:661px;top:778px;width:100px;height:24px;overflow:hidden;">
<div class="t" style="left:0.00px;top:4.79px;font-size:15.6px;line-height:15.6px;color:#000;transform:scaleX(1.0684);">In-store</div>
</div>
<div class="t" style="left:794.29px;top:782.79px;font-size:15.6px;line-height:15.6px;color:#000;transform:scaleX(1.1151);">4/4/2023</div>
<div style="position:absolute;left:37px;top:802px;width:100px;height:24px;overflow:hidden;">
<div class="t" style="left:0.00px;top:4.79px;font-size:15.6px;line-height:15.6px;color:#000;transform:scaleX(1.0052);">TXN_3567645</div>
</div>
<div style="position:absolute;left:141px;top:802px;width:100px;height:24px;overflow:hidden;">
<div class="t" style="left:0.00px;top:4.79px;font-size:15.6px;line-height:15.6px;color:#000;transform:scaleX(1.0506);">Smoothie</div>
</div>
<div class="t" style="left:333.00px;top:806.79px;font-size:15.6px;line-height:15.6px;color:#000;transform:scaleX(1.0370);">4</div>
<div class="t" style="left:437.00px;top:806.79px;font-size:15.6px;line-height:15.6px;color:#000;transform:scaleX(1.0370);">4</div>
<div class="t" style="left:532.01px;top:806.79px;font-size:15.6px;line-height:15.6px;color:#000;transform:scaleX(1.0370);">16</div>
<div style="position:absolute;left:557px;top:802px;width:100px;height:24px;overflow:hidden;">
<div class="t" style="left:0.00px;top:4.79px;font-size:15.6px;line-height:15.6px;color:#000;transform:scaleX(1.0197);">Credit Card</div>
</div>
<div style="position:absolute;left:661px;top:802px;width:100px;height:24px;overflow:hidden;">
<div class="t" style="left:0.00px;top:4.79px;font-size:15.6px;line-height:15.6px;color:#000;transform:scaleX(1.0348);">Takeaway</div>
</div>
<div class="t" style="left:785.30px;top:806.79px;font-size:15.6px;line-height:15.6px;color:#000;transform:scaleX(1.1053);">3/30/2023</div>
<div style="position:absolute;left:37px;top:826px;width:100px;height:24px;overflow:hidden;">
<div class="t" style="left:0.00px;top:4.79px;font-size:15.6px;line-height:15.6px;color:#000;transform:scaleX(1.0052);">TXN_5132361</div>
</div>
<div style="position:absolute;left:141px;top:826px;width:100px;height:24px;overflow:hidden;">
<div class="t" style="left:0.00px;top:4.79px;font-size:15.6px;line-height:15.6px;color:#000;transform:scaleX(1.0187);">Sandwich</div>
</div>
<div class="t" style="left:333.00px;top:830.79px;font-size:15.6px;line-height:15.6px;color:#000;transform:scaleX(1.0370);">3</div>
<div class="t" style="left:437.00px;top:830.79px;font-size:15.6px;line-height:15.6px;color:#000;transform:scaleX(1.0370);">4</div>
<div class="t" style="left:532.01px;top:830.79px;font-size:15.6px;line-height:15.6px;color:#000;transform:scaleX(1.0370);">12</div>
<div style="position:absolute;left:557px;top:826px;width:100px;height:24px;overflow:hidden;">
<div class="t" style="left:0.00px;top:4.79px;font-size:15.6px;line-height:15.6px;color:#000;transform:scaleX(1.0744);">Digital Wallet</div>
</div>
<div style="position:absolute;left:661px;top:826px;width:100px;height:24px;overflow:hidden;">
<div class="t" style="left:0.00px;top:4.79px;font-size:15.6px;line-height:15.6px;color:#000;transform:scaleX(1.0348);">Takeaway</div>
</div>
<div class="t" style="left:785.30px;top:830.79px;font-size:15.6px;line-height:15.6px;color:#000;transform:scaleX(1.1053);">12/1/2023</div>
<div style="position:absolute;left:37px;top:850px;width:100px;height:24px;overflow:hidden;">
<div class="t" style="left:0.00px;top:4.79px;font-size:15.6px;line-height:15.6px;color:#000;transform:scaleX(1.0052);">TXN_2616390</div>
</div>
<div style="position:absolute;left:141px;top:850px;width:100px;height:24px;overflow:hidden;">
<div class="t" style="left:0.00px;top:4.79px;font-size:15.6px;line-height:15.6px;color:#000;transform:scaleX(1.0187);">Sandwich</div>
</div>
<div class="t" style="left:333.00px;top:854.79px;font-size:15.6px;line-height:15.6px;color:#000;transform:scaleX(1.0370);">2</div>
<div class="t" style="left:437.00px;top:854.79px;font-size:15.6px;line-height:15.6px;color:#000;transform:scaleX(1.0370);">4</div>
<div class="t" style="left:541.00px;top:854.79px;font-size:15.6px;line-height:15.6px;color:#000;transform:scaleX(1.0370);">8</div>
<div class="t" style="left:785.30px;top:854.79px;font-size:15.6px;line-height:15.6px;color:#000;transform:scaleX(1.1053);">9/18/2023</div>
<div style="position:absolute;left:37px;top:874px;width:100px;height:24px;overflow:hidden;">
<div class="t" style="left:0.00px;top:4.79px;font-size:15.6px;line-height:15.6px;color:#000;transform:scaleX(1.0052);">TXN_9400181</div>
</div>
<div style="position:absolute;left:141px;top:874px;width:100px;height:24px;overflow:hidden;">
<div class="t" style="left:0.00px;top:4.79px;font-size:15.6px;line-height:15.6px;color:#000;transform:scaleX(1.0187);">Sandwich</div>
</div>
<div class="t" style="left:333.00px;top:878.79px;font-size:15.6px;line-height:15.6px;color:#000;transform:scaleX(1.0370);">5</div>
<div class="t" style="left:437.00px;top:878.79px;font-size:15.6px;line-height:15.6px;color:#000;transform:scaleX(1.0370);">4</div>
<div class="t" style="left:532.01px;top:878.79px;font-size:15.6px;line-height:15.6px;color:#000;transform:scaleX(1.0370);">20</div>
<div style="position:absolute;left:557px;top:874px;width:100px;height:24px;overflow:hidden;">
<div class="t" style="left:0.00px;top:4.79px;font-size:15.6px;line-height:15.6px;color:#000;transform:scaleX(0.9401);">Cash</div>
</div>
<div style="position:absolute;left:661px;top:874px;width:100px;height:24px;overflow:hidden;">
<div class="t" style="left:0.00px;top:4.79px;font-size:15.6px;line-height:15.6px;color:#000;transform:scaleX(1.0684);">In-store</div>
</div>
<div class="t" style="left:794.29px;top:878.79px;font-size:15.6px;line-height:15.6px;color:#000;transform:scaleX(1.1151);">6/3/2023</div>
<div style="position:absolute;left:37px;top:898px;width:100px;height:24px;overflow:hidden;">
<div class="t" style="left:0.00px;top:4.79px;font-size:15.6px;line-height:15.6px;color:#000;transform:scaleX(1.0052);">TXN_7958992</div>
</div>
<div style="position:absolute;left:141px;top:898px;width:100px;height:24px;overflow:hidden;">
<div class="t" style="left:0.00px;top:4.79px;font-size:15.6px;line-height:15.6px;color:#000;transform:scaleX(1.0506);">Smoothie</div>
</div>
<div class="t" style="left:333.00px;top:902.79px;font-size:15.6px;line-height:15.6px;color:#000;transform:scaleX(1.0370);">3</div>
<div class="t" style="left:437.00px;top:902.79px;font-size:15.6px;line-height:15.6px;color:#000;transform:scaleX(1.0370);">4</div>
<div class="t" style="left:776.30px;top:902.79px;font-size:15.6px;line-height:15.6px;color:#000;transform:scaleX(1.0977);">12/13/2023</div>
<div style="position:absolute;left:37px;top:922px;width:100px;height:24px;overflow:hidden;">
<div class="t" style="left:0.00px;top:4.79px;font-size:15.6px;line-height:15.6px;color:#000;transform:scaleX(1.0052);">TXN_5183041</div>
</div>
<div style="position:absolute;left:141px;top:922px;width:100px;height:24px;overflow:hidden;">
<div class="t" style="left:0.00px;top:4.79px;font-size:15.6px;line-height:15.6px;color:#000;transform:scaleX(1.0124);">Cookie</div>
</div>
<div class="t" style="left:333.00px;top:926.79px;font-size:15.6px;line-height:15.6px;color:#000;transform:scaleX(1.0370);">5</div>
<div class="t" style="left:437.00px;top:926.79px;font-size:15.6px;line-height:15.6px;color:#000;transform:scaleX(1.0370);">1</div>
<div class="t" style="left:541.00px;top:926.79px;font-size:15.6px;line-height:15.6px;color:#000;transform:scaleX(1.0370);">5</div>
<div style="position:absolute;left:557px;top:922px;width:100px;height:24px;overflow:hidden;">
<div class="t" style="left:0.00px;top:4.79px;font-size:15.6px;line-height:15.6px;color:#000;transform:scaleX(1.0197);">Credit Card</div>
</div>
<div style="position:absolute;left:661px;top:922px;width:100px;height:24px;overflow:hidden;">
<div class="t" style="left:0.00px;top:4.79px;font-size:15.6px;line-height:15.6px;color:#000;transform:scaleX(1.0684);">In-store</div>
</div>
<div class="t" style="left:785.30px;top:926.79px;font-size:15.6px;line-height:15.6px;color:#000;transform:scaleX(1.1053);">4/20/2023</div>
<div style="position:absolute;left:37px;top:946px;width:100px;height:24px;overflow:hidden;">
<div class="t" style="left:0.00px;top:4.79px;font-size:15.6px;line-height:15.6px;color:#000;transform:scaleX(1.0052);">TXN_5695074</div>
</div>
<div style="position:absolute;left:141px;top:946px;width:100px;height:24px;overflow:hidden;">
<div class="t" style="left:0.00px;top:4.79px;font-size:15.6px;line-height:15.6px;color:#000;transform:scaleX(0.9720);">Juice</div>
</div>
<div class="t" style="left:333.00px;top:950.79px;font-size:15.6px;line-height:15.6px;color:#000;transform:scaleX(1.0370);">4</div>
<div class="t" style="left:437.00px;top:950.79px;font-size:15.6px;line-height:15.6px;color:#000;transform:scaleX(1.0370);">3</div>
<div class="t" style="left:532.01px;top:950.79px;font-size:15.6px;line-height:15.6px;color:#000;transform:scaleX(1.0370);">12</div>
<div style="position:absolute;left:557px;top:946px;width:100px;height:24px;overflow:hidden;">
<div class="t" style="left:0.00px;top:4.79px;font-size:15.6px;line-height:15.6px;color:#000;transform:scaleX(1.0197);">Credit Card</div>
</div>
<div style="position:absolute;left:661px;top:946px;width:100px;height:24px;overflow:hidden;">
<div class="t" style="left:0.00px;top:4.79px;font-size:15.6px;line-height:15.6px;color:#000;transform:scaleX(1.0348);">Takeaway</div>
</div>
<div class="t" style="left:785.30px;top:950.79px;font-size:15.6px;line-height:15.6px;color:#000;transform:scaleX(1.1053);">4/10/2023</div>
<div style="position:absolute;left:37px;top:970px;width:100px;height:24px;overflow:hidden;">
<div class="t" style="left:0.00px;top:4.79px;font-size:15.6px;line-height:15.6px;color:#000;transform:scaleX(1.0052);">TXN_8467949</div>
</div>
<div style="position:absolute;left:141px;top:970px;width:100px;height:24px;overflow:hidden;">
<div class="t" style="left:0.00px;top:4.79px;font-size:15.6px;line-height:15.6px;color:#000;transform:scaleX(1.0506);">Smoothie</div>
</div>
<div class="t" style="left:333.00px;top:974.79px;font-size:15.6px;line-height:15.6px;color:#000;transform:scaleX(1.0370);">5</div>
<div class="t" style="left:437.00px;top:974.79px;font-size:15.6px;line-height:15.6px;color:#000;transform:scaleX(1.0370);">4</div>
<div class="t" style="left:532.01px;top:974.79px;font-size:15.6px;line-height:15.6px;color:#000;transform:scaleX(1.0370);">20</div>
<div class="t" style="left:557.00px;top:974.79px;font-size:15.6px;line-height:15.6px;color:#000;transform:scaleX(1.0197);">Credit Card</div>
<div class="t" style="left:785.30px;top:974.79px;font-size:15.6px;line-height:15.6px;color:#000;transform:scaleX(1.1241);">3/11/2023</div>
<div style="position:absolute;left:37px;top:994px;width:100px;height:24px;overflow:hidden;">
<div class="t" style="left:0.00px;top:4.79px;font-size:15.6px;line-height:15.6px;color:#000;transform:scaleX(1.0052);">TXN_7640952</div>
</div>
<div style="position:absolute;left:141px;top:994px;width:100px;height:24px;overflow:hidden;">
<div class="t" style="left:0.00px;top:4.79px;font-size:15.6px;line-height:15.6px;color:#000;transform:scaleX(0.9575);">Cake</div>
</div>
<div class="t" style="left:333.00px;top:998.79px;font-size:15.6px;line-height:15.6px;color:#000;transform:scaleX(1.0370);">4</div>
<div class="t" style="left:437.00px;top:998.79px;font-size:15.6px;line-height:15.6px;color:#000;transform:scaleX(1.0370);">3</div>
<div class="t" style="left:532.01px;top:998.79px;font-size:15.6px;line-height:15.6px;color:#000;transform:scaleX(1.0370);">12</div>
<div style="position:absolute;left:557px;top:994px;width:100px;height:24px;overflow:hidden;">
<div class="t" style="left:0.00px;top:4.79px;font-size:15.6px;line-height:15.6px;color:#000;transform:scaleX(1.0744);">Digital Wallet</div>
</div>
<div class="t" style="left:661.00px;top:998.79px;font-size:15.6px;line-height:15.6px;color:#000;transform:scaleX(1.0348);">Takeaway</div>
<div class="r" style="left:893.5px;top:501.8px;width:4.8px;height:4.8px;background:#000;border-radius:50%;"></div>
<div class="r" style="left:968px;top:584px;width:107px;height:27px;background:transparent;box-sizing:border-box;border:2px solid #107c41;"></div>
<div class="r" style="left:1071px;top:607px;width:5px;height:5px;background:#217346;box-shadow:0 0 0 1px #fff;"></div>
<div class="r" style="left:1895px;top:250px;width:23px;height:770px;background:#262626;"></div>
<div class="r" style="left:1898px;top:252px;width:19px;height:19px;background:#333333;box-sizing:border-box;border:1px solid #6a6a6a;"></div>
<svg class="s" style="left:1902px;top:257px;" width="11" height="8" viewBox="0 0 11 8"><path d="M0.5 7 L5.5 1.5 L10.5 7 Z" fill="#f5f5f5"/></svg>
<div class="r" style="left:1898px;top:271px;width:19px;height:552px;background:#353535;box-sizing:border-box;border:1px solid #6a6a6a;"></div>
<div class="r" style="left:1898px;top:823px;width:19px;height:179px;background:#0a0a0a;"></div>
<div class="r" style="left:1898px;top:1002px;width:19px;height:19px;background:#333333;box-sizing:border-box;border:1px solid #6a6a6a;"></div>
<svg class="s" style="left:1902px;top:1008px;" width="11" height="8" viewBox="0 0 11 8"><path d="M0.5 1 L5.5 6.5 L10.5 1 Z" fill="#f5f5f5"/></svg>
<div class="r" style="left:0px;top:1020px;width:1918px;height:32px;background:#262626;"></div>
<div class="r" style="left:0px;top:1020px;width:1895px;height:1px;background:#5a5a5a;"></div>
<svg class="s" style="left:29px;top:1031px;" width="8" height="11" viewBox="0 0 8 11"><path d="M7 0.5 V10.5 L1 5.5 Z" fill="#a0a0a0"/></svg>
<svg class="s" style="left:60px;top:1031px;" width="8" height="11" viewBox="0 0 8 11"><path d="M1 0.5 V10.5 L7 5.5 Z" fill="#a0a0a0"/></svg>
<div class="r" style="left:112px;top:1020px;width:165px;height:29px;background:#ffffff;"></div>
<div class="r" style="left:112px;top:1047px;width:165px;height:2px;background:#217346;"></div>
<div class="t" style="left:125.00px;top:1025.80px;font-size:15px;line-height:15px;color:#217346;font-weight:bold;transform:scaleX(1.0844);">transactions_dirty</div>
<svg class="s" style="left:315px;top:1026px;" width="22" height="22" viewBox="0 0 22 22"><circle cx="11" cy="11" r="9.5" fill="none" stroke="#f0f0f0" stroke-width="1.4"/><path d="M11 5.5 V16.5 M5.5 11 H16.5" stroke="#f0f0f0" stroke-width="1.6"/></svg>
<div class="r" style="left:1149.5px;top:1029.5px;width:3px;height:3px;background:#e8e8e8;"></div>
<div class="r" style="left:1149.5px;top:1035.0px;width:3px;height:3px;background:#e8e8e8;"></div>
<div class="r" style="left:1149.5px;top:1040.5px;width:3px;height:3px;background:#e8e8e8;"></div>
<div class="r" style="left:1170px;top:1027px;width:19px;height:19px;background:#333333;box-sizing:border-box;border:1px solid #6a6a6a;"></div>
<svg class="s" style="left:1175px;top:1031px;" width="8" height="11" viewBox="0 0 8 11"><path d="M6.3 1 V10 L1 5.5 Z" fill="#f5f5f5"/></svg>
<div class="r" style="left:1188px;top:1027px;width:647px;height:19px;background:#383838;box-sizing:border-box;border:1px solid #6a6a6a;"></div>
<div class="r" style="left:1835px;top:1027px;width:41px;height:19px;background:#0a0a0a;"></div>
<div class="r" style="left:1876px;top:1027px;width:19px;height:19px;background:#333333;box-sizing:border-box;border:1px solid #6a6a6a;"></div>
<svg class="s" style="left:1882px;top:1031px;" width="8" height="11" viewBox="0 0 8 11"><path d="M1 0.5 V10.5 L7 5.5 Z" fill="#f5f5f5"/></svg>
<div class="r" style="left:0px;top:1052px;width:1918px;height:26px;background:#262626;"></div>
<div class="r" style="left:0px;top:1052px;width:1918px;height:1px;background:#444444;"></div>
<div class="t" style="left:14.50px;top:1060.00px;font-size:13px;line-height:13px;color:#f0f0f0;transform:scaleX(0.9647);">Prêt</div>
<svg class="s" style="left:55px;top:1052px;" width="30" height="26" viewBox="0 0 30 26"><path d="M14.36 6.92 A7.7 7.7 0 1 0 20.1 20.8" fill="none" stroke="#e6e6e6" stroke-width="1.3" stroke-dasharray="3 1.2"/><path d="M15.4 5.8 V14.5 M12.8 11.8 L15.4 14.6 L18 11.8" fill="none" stroke="#e6e6e6" stroke-width="1.2"/><path d="M19.3 14.2 Q19.3 11.3 22.6 11.3 Q25.9 11.3 25.9 14.2 Q25.9 16.4 23.6 17.6 Q22.2 18.5 22.2 20.3 V21.3" fill="none" stroke="#f0f0f0" stroke-width="2.4"/><rect x="21" y="22.6" width="2.6" height="2.4" fill="#f0f0f0"/></svg>
<div class="t" style="left:85.00px;top:1060.00px;font-size:13px;line-height:13px;color:#f0f0f0;transform:scaleX(1.0048);">Accessibilité : non disponible</div>
<div class="r" style="left:1547px;top:1053px;width:50px;height:25px;background:#4a4a4a;"></div>
<div class="r" style="left:1564px;top:1058px;width:1px;height:16px;background:#f0f0f0;"></div>
<div class="r" style="left:1569px;top:1058px;width:1px;height:16px;background:#f0f0f0;"></div>
<div class="r" style="left:1574px;top:1058px;width:1px;height:16px;background:#f0f0f0;"></div>
<div class="r" style="left:1579px;top:1058px;width:1px;height:16px;background:#f0f0f0;"></div>
<div class="r" style="left:1564px;top:1058px;width:16px;height:1px;background:#f0f0f0;"></div>
<div class="r" style="left:1564px;top:1063px;width:16px;height:1px;background:#f0f0f0;"></div>
<div class="r" style="left:1564px;top:1068px;width:16px;height:1px;background:#f0f0f0;"></div>
<div class="r" style="left:1564px;top:1073px;width:16px;height:1px;background:#f0f0f0;"></div>
<div class="r" style="left:1613px;top:1058px;width:17px;height:16px;background:transparent;box-sizing:border-box;border:1px solid #f0f0f0;"></div>
<div class="r" style="left:1617px;top:1060px;width:9px;height:12px;background:transparent;box-sizing:border-box;border:1px solid #f0f0f0;"></div>
<div class="r" style="left:1619px;top:1063px;width:5px;height:1px;background:#f0f0f0;"></div>
<div class="r" style="left:1619px;top:1065px;width:5px;height:1px;background:#f0f0f0;"></div>
<div class="r" style="left:1619px;top:1067px;width:5px;height:1px;background:#f0f0f0;"></div>
<div class="r" style="left:1663px;top:1058px;width:17px;height:16px;background:transparent;box-sizing:border-box;border:1px solid #f0f0f0;"></div>
<div class="r" style="left:1664px;top:1059px;width:4px;height:9px;background:#e8e8e8;"></div>
<div class="r" style="left:1669px;top:1059px;width:5px;height:9px;background:#e8e8e8;"></div>
<div class="r" style="left:1704px;top:1065px;width:10px;height:1.3px;background:#e0e0e0;"></div>
<div class="r" style="left:1720px;top:1065px;width:125px;height:1px;background:#d0d0d0;"></div>
<div class="r" style="left:1780px;top:1059px;width:6px;height:15px;background:#f0f0f0;"></div>
<div class="r" style="left:1850px;top:1065px;width:11px;height:1.3px;background:#e0e0e0;"></div>
<div class="r" style="left:1854.8px;top:1060px;width:1.3px;height:11px;background:#e0e0e0;"></div>
<div class="t" style="left:1878.00px;top:1060.00px;font-size:13px;line-height:13px;color:#f0f0f0;transform:scaleX(0.8873);">100%</div>
</body></html>
